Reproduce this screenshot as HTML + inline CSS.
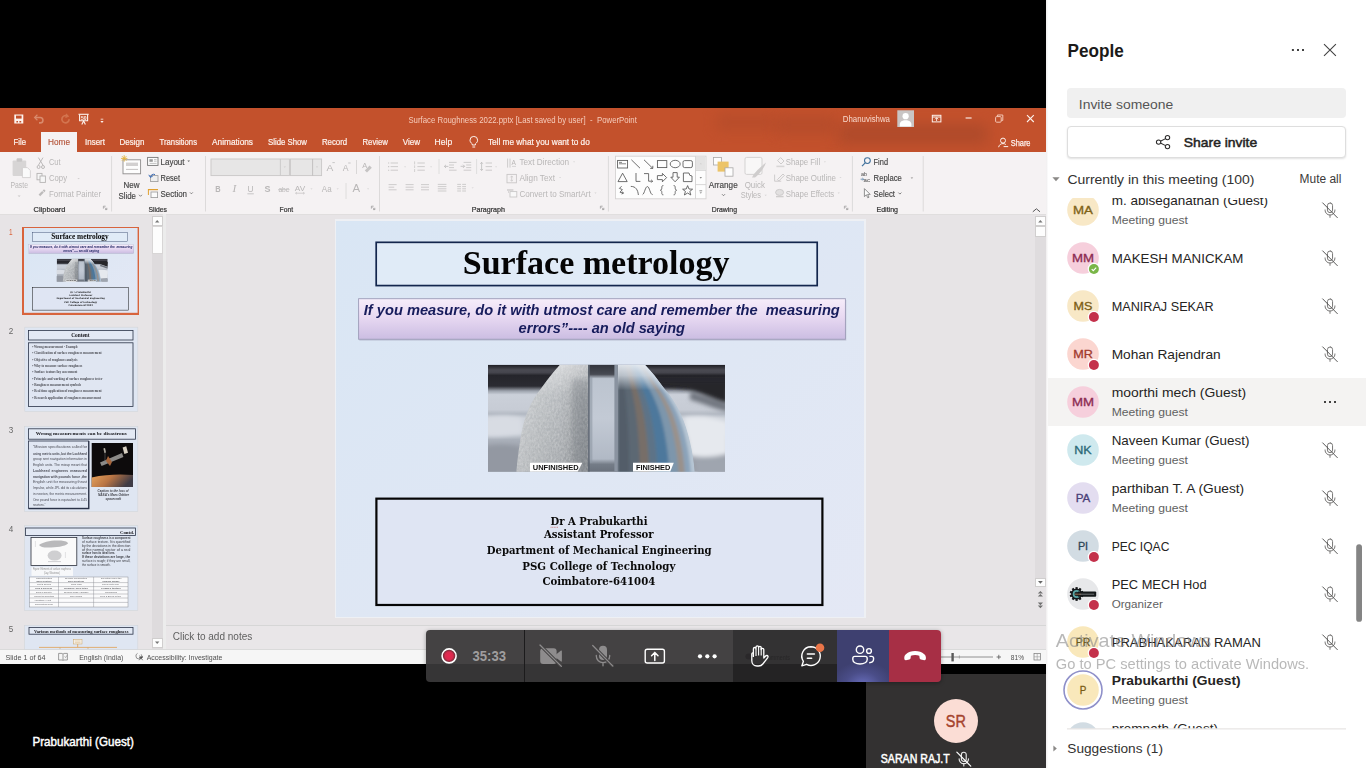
<!DOCTYPE html>
<html lang="en"><head><meta charset="utf-8"><title>Meeting - Surface metrology</title>
<style>
html,body{margin:0;padding:0}
body{width:1366px;height:768px;overflow:hidden;position:relative;background:#000;font-family:"Liberation Sans",sans-serif}
svg text{white-space:pre}
</style></head><body>
<!-- shared PowerPoint window -->
<div id="ppt" style="filter:blur(.35px)">
<div style="position:absolute;left:0px;top:108px;width:1046px;height:556px;background:#e7e4e6;"></div>
<div style="position:absolute;left:0px;top:108px;width:1046px;height:44px;background:#c3512c;"></div>
<div style="position:absolute;left:0;top:108px;width:1046px;height:44px;overflow:hidden"><div style="position:absolute;left:838px;top:16px;width:150px;height:20px;background:#a9482a;filter:blur(7px);opacity:.75"></div><div style="position:absolute;left:716px;top:6px;width:60px;height:16px;background:#b04a2a;filter:blur(7px);opacity:.6"></div><div style="position:absolute;left:776px;top:8px;width:60px;height:18px;background:#ad492a;filter:blur(7px);opacity:.6"></div></div>
<div style="position:absolute;left:0px;top:152px;width:1046px;height:61.8px;background:#f5f2f3;"></div>
<div style="position:absolute;left:41px;top:132px;width:36px;height:21px;background:#f5f2f3;"></div>
<div style="position:absolute;left:0px;top:213.6px;width:1046px;height:0.8px;background:#e0dede;"></div>
<svg width="1046" height="106" viewBox="0 108 1046 106" style="position:absolute;left:0px;top:108px;overflow:hidden;" font-family='"Liberation Sans", sans-serif'>
<path d="M14.3 114.4h9v9.2h-9z" fill="#fdf3ee"/><path d="M16 115.6h5.6v3h-5.6z" fill="#c3512c"/><path d="M16.4 121h1.6v1.6h-1.6zM19.4 121h1.8v1.6h-1.8z" fill="#c3512c"/>
<g fill="none" stroke="#d98a6c" stroke-width="1.6"><path d="M35 117.5h5.2a2.6 2.6 0 0 1 0 5.4h-1.2"/><path d="M37.4 114.8l-2.8 2.7 2.8 2.7" stroke-width="1.2"/></g>
<g fill="none" stroke="#d3744f" stroke-width="1.7"><path d="M67.5 116.2a3.6 3.6 0 1 0 1.6 3"/><path d="M66 113.8l2.2 2.4-2.8 1.2" stroke-width="1.2"/></g>
<g fill="none" stroke="#fdf3ee" stroke-width="1.1"><path d="M78.5 114.3h10.2"/><path d="M79.6 114.5v6.2h8v-6.2"/><path d="M81.8 124.4l1.8-3.4 1.8 3.4"/></g>
<text x="81.0" y="120.2" font-size="5.6" fill="#fdf3ee" textLength="5.6" lengthAdjust="spacingAndGlyphs" font-weight="700">50</text>
<path d="M100.4 121h3.2l-1.6 1.9z" fill="#fdf3ee"/><path d="M100.7 119.2h2.6" stroke="#fdf3ee" stroke-width=".8"/>
<text x="408.4" y="122.9" font-size="9.6" fill="#f6cdbd" textLength="228.5" lengthAdjust="spacingAndGlyphs">Surface Roughness 2022.pptx [Last saved by user]  -  PowerPoint</text>
<text x="842.8" y="122.3" font-size="9.2" fill="#f8d9cc" textLength="47.2" lengthAdjust="spacingAndGlyphs">Dhanuvishwa</text>
<rect x="897.3" y="110.3" width="16.7" height="16.7" fill="#c9c5c4"/><circle cx="905.6" cy="116.2" r="3.1" fill="#fff"/><path d="M899.8 126.6v-2.2c0-2.6 2.2-4.2 5.8-4.2s5.8 1.6 5.8 4.2v2.2z" fill="#fff"/>
<g fill="none" stroke="#fdf3ee" stroke-width="1"><rect x="932.3" y="115.3" width="8.6" height="6.6"/><path d="M932.3 117h8.6"/><path d="M936.6 121v-3.2m-1.6 1.5l1.6-1.6 1.6 1.6" stroke-width=".9"/></g>
<path d="M965.6 118h6" stroke="#fdf3ee" stroke-width="1.1"/>
<g fill="none" stroke="#f3c6b4" stroke-width="1"><rect x="995.6" y="116.6" width="5.6" height="5.6" rx="1"/><path d="M997.4 116.4v-1.4h5.4v5.4h-1.4"/></g>
<path d="M1027 115.2l6.8 6.8m0-6.8l-6.8 6.8" stroke="#fdf3ee" stroke-width="1.1"/>
<g fill="none" stroke="#fdf3ee" stroke-width="1"><circle cx="1003" cy="140.6" r="2.5"/><path d="M998.6 147.2c.6-2.4 2.2-3.6 4.4-3.6 1.2 0 2 .3 2.8 .9"/><path d="M1003.6 146.6h4.6"/></g>
<text x="1010.7" y="145.8" font-size="8.6" fill="#fdf3ee" textLength="19.8" lengthAdjust="spacingAndGlyphs" stroke="#fdf3ee" stroke-width="0.25">Share</text>
<text x="13.5" y="144.9" font-size="8.7" fill="#fdf3ee" textLength="12.5" lengthAdjust="spacingAndGlyphs" stroke="#fdf3ee" stroke-width="0.2">File</text>
<text x="85.0" y="144.9" font-size="8.7" fill="#fdf3ee" textLength="20.0" lengthAdjust="spacingAndGlyphs" stroke="#fdf3ee" stroke-width="0.2">Insert</text>
<text x="119.6" y="144.9" font-size="8.7" fill="#fdf3ee" textLength="24.9" lengthAdjust="spacingAndGlyphs" stroke="#fdf3ee" stroke-width="0.2">Design</text>
<text x="159.6" y="144.9" font-size="8.7" fill="#fdf3ee" textLength="37.4" lengthAdjust="spacingAndGlyphs" stroke="#fdf3ee" stroke-width="0.2">Transitions</text>
<text x="212.0" y="144.9" font-size="8.7" fill="#fdf3ee" textLength="41.0" lengthAdjust="spacingAndGlyphs" stroke="#fdf3ee" stroke-width="0.2">Animations</text>
<text x="268.0" y="144.9" font-size="8.7" fill="#fdf3ee" textLength="39.0" lengthAdjust="spacingAndGlyphs" stroke="#fdf3ee" stroke-width="0.2">Slide Show</text>
<text x="321.9" y="144.9" font-size="8.7" fill="#fdf3ee" textLength="25.3" lengthAdjust="spacingAndGlyphs" stroke="#fdf3ee" stroke-width="0.2">Record</text>
<text x="362.5" y="144.9" font-size="8.7" fill="#fdf3ee" textLength="25.5" lengthAdjust="spacingAndGlyphs" stroke="#fdf3ee" stroke-width="0.2">Review</text>
<text x="402.7" y="144.9" font-size="8.7" fill="#fdf3ee" textLength="17.3" lengthAdjust="spacingAndGlyphs" stroke="#fdf3ee" stroke-width="0.2">View</text>
<text x="434.6" y="144.9" font-size="8.7" fill="#fdf3ee" textLength="17.6" lengthAdjust="spacingAndGlyphs" stroke="#fdf3ee" stroke-width="0.2">Help</text>
<text x="487.9" y="144.9" font-size="8.7" fill="#fdf3ee" textLength="101.9" lengthAdjust="spacingAndGlyphs" stroke="#fdf3ee" stroke-width="0.2">Tell me what you want to do</text>
<text x="48.0" y="144.9" font-size="8.7" fill="#b5553a" textLength="22.0" lengthAdjust="spacingAndGlyphs" stroke="#b5553a" stroke-width="0.15">Home</text>
<g fill="none" stroke="#fdf3ee" stroke-width="1"><path d="M472.2 145v-1.2c-1.4-1-2.2-2.2-2.2-3.6a3.8 3.8 0 0 1 7.6 0c0 1.4-.8 2.6-2.2 3.6v1.2z"/><path d="M472.4 147h2.8"/></g>
<path d="M111.6 156v55.5" stroke="#dcdada" stroke-width="1"/>
<path d="M205.5 156v55.5" stroke="#dcdada" stroke-width="1"/>
<path d="M379.5 156v55.5" stroke="#dcdada" stroke-width="1"/>
<path d="M608.4 156v55.5" stroke="#dcdada" stroke-width="1"/>
<path d="M852.4 156v55.5" stroke="#dcdada" stroke-width="1"/>
<path d="M923.2 156v55.5" stroke="#dcdada" stroke-width="1"/>
<text x="33.5" y="211.8" font-size="6.9" fill="#333333" textLength="32.0" lengthAdjust="spacingAndGlyphs" stroke="#333333" stroke-width="0.2">Clipboard</text>
<text x="148.5" y="211.8" font-size="6.9" fill="#333333" textLength="18.5" lengthAdjust="spacingAndGlyphs" stroke="#333333" stroke-width="0.2">Slides</text>
<text x="279.6" y="211.8" font-size="6.9" fill="#333333" textLength="13.4" lengthAdjust="spacingAndGlyphs" stroke="#333333" stroke-width="0.2">Font</text>
<text x="471.7" y="211.8" font-size="6.9" fill="#333333" textLength="33.3" lengthAdjust="spacingAndGlyphs" stroke="#333333" stroke-width="0.2">Paragraph</text>
<text x="711.8" y="211.8" font-size="6.9" fill="#333333" textLength="25.2" lengthAdjust="spacingAndGlyphs" stroke="#333333" stroke-width="0.2">Drawing</text>
<text x="876.5" y="211.8" font-size="6.9" fill="#333333" textLength="21.5" lengthAdjust="spacingAndGlyphs" stroke="#333333" stroke-width="0.2">Editing</text>
<path d="M104.6 207.6h-2.2v2.4m1.2-1.2l2.2 2.2m0-1.8v1.8h-1.8" fill="none" stroke="#9c9a9a" stroke-width=".8" transform="translate(1 -1.4)"/>
<path d="M372.6 207.6h-2.2v2.4m1.2-1.2l2.2 2.2m0-1.8v1.8h-1.8" fill="none" stroke="#9c9a9a" stroke-width=".8" transform="translate(1 -1.4)"/>
<path d="M601.6 207.6h-2.2v2.4m1.2-1.2l2.2 2.2m0-1.8v1.8h-1.8" fill="none" stroke="#9c9a9a" stroke-width=".8" transform="translate(1 -1.4)"/>
<path d="M845.6 207.6h-2.2v2.4m1.2-1.2l2.2 2.2m0-1.8v1.8h-1.8" fill="none" stroke="#9c9a9a" stroke-width=".8" transform="translate(1 -1.4)"/>
<path d="M1032.8 211.8l3.6-3 3.6 3" fill="none" stroke="#555" stroke-width="1"/>
<g opacity=".9"><rect x="12.6" y="160.4" width="13.6" height="15.6" rx="1" fill="#d4d2d2"/><rect x="16.6" y="158.2" width="5.6" height="3.6" rx="1" fill="#c4c2c2"/><path d="M22.4 167.6h5l3 3v7h-8z" fill="#fbfbfb" stroke="#c9c7c7" stroke-width=".8"/></g>
<text x="10.5" y="187.8" font-size="8.4" fill="#b9b7b7" textLength="17.5" lengthAdjust="spacingAndGlyphs">Paste</text>
<path d="M17.6 195.4h3l-1.5 1.5z" fill="#c9c7c7"/>
<text x="49.0" y="164.6" font-size="8.4" fill="#b9b7b7" textLength="11.5" lengthAdjust="spacingAndGlyphs">Cut</text>
<text x="49.0" y="180.6" font-size="8.4" fill="#b9b7b7" textLength="18.0" lengthAdjust="spacingAndGlyphs">Copy</text>
<text x="49.0" y="196.5" font-size="8.4" fill="#b9b7b7" textLength="52.0" lengthAdjust="spacingAndGlyphs">Format Painter</text>
<path d="M77.4 178h2.4l-1.2 1.2z" fill="#d0cece"/>
<g fill="none" stroke="#b5b3b3" stroke-width=".9"><path d="M38.4 157.6l4.6 7.6m0-7.6l-4.6 7.6"/><circle cx="38.6" cy="167" r="1.5"/><circle cx="43" cy="167" r="1.5"/></g>
<g fill="#f6f6f6" stroke="#b5b3b3" stroke-width=".9"><rect x="37" y="173.4" width="5" height="6.4"/><rect x="40" y="176" width="5.4" height="6.4"/></g>
<g fill="#bdbbbb"><path d="M38.6 194.6l3.6-3.6 1.6 1.6-3.6 3.6z"/><path d="M42.6 190.4l1.4-1.2 1.6 1.6-1.2 1.4z"/></g>
<rect x="123" y="159.8" width="17.6" height="14" fill="#fdfdfd" stroke="#8f8d8d" stroke-width=".9"/><rect x="126" y="162.6" width="12" height="3.4" fill="#d2d0d0"/><path d="M126 169.4h12" stroke="#bdbbbb" stroke-width=".9"/><path d="M124.2 155.2v6.4m-3.2-3.2h6.4m-5.4-2.2l4.4 4.4m0-4.4l-4.4 4.4" stroke="#e3b23c" stroke-width=".9"/>
<text x="123.5" y="187.7" font-size="8.6" fill="#444444" textLength="16.0" lengthAdjust="spacingAndGlyphs" stroke="#444444" stroke-width="0.15">New</text>
<text x="118.5" y="198.6" font-size="8.6" fill="#444444" textLength="17.5" lengthAdjust="spacingAndGlyphs" stroke="#444444" stroke-width="0.15">Slide</text>
<path d="M139 194.8l1.5 1.5 1.5-1.5" fill="none" stroke="#666" stroke-width=".8"/>
<text x="160.5" y="164.6" font-size="8.6" fill="#444444" textLength="24.0" lengthAdjust="spacingAndGlyphs" stroke="#444444" stroke-width="0.15">Layout</text>
<text x="160.5" y="180.6" font-size="8.6" fill="#444444" textLength="19.5" lengthAdjust="spacingAndGlyphs" stroke="#444444" stroke-width="0.15">Reset</text>
<text x="160.5" y="196.5" font-size="8.6" fill="#444444" textLength="26.5" lengthAdjust="spacingAndGlyphs" stroke="#444444" stroke-width="0.15">Section</text>
<path d="M187.4 160.6h2.6l-1.3 1.3z" fill="#666"/><path d="M190 192.4l1.4 1.4 1.4-1.4" fill="none" stroke="#666" stroke-width=".8"/>
<rect x="147.6" y="157.4" width="10.4" height="8" fill="#fbfbfb" stroke="#777" stroke-width=".9"/><rect x="149.4" y="159.2" width="3.4" height="2.6" fill="#999"/><path d="M154 159.6h2.6m-2.6 1.6h2.6m-7 2.2h7" stroke="#aaa" stroke-width=".7"/>
<rect x="150.6" y="175.6" width="7.4" height="6" fill="#eee" stroke="#999" stroke-width=".8"/><path d="M150.6 177.2a3 3 0 0 1 4.4-2.6m-6.2 .2l1.6 2.6 2.4-1.4" fill="none" stroke="#3d6db5" stroke-width="1"/>
<path d="M148 189.6h10" stroke="#e0a030" stroke-width="1.2"/><rect x="151" y="192" width="6.6" height="5.6" fill="#fbfbfb" stroke="#999" stroke-width=".8"/><path d="M148.4 189v6" stroke="#e0a030" stroke-width="1"/>
<rect x="211" y="159" width="78.4" height="16.6" fill="#e7e6e6" stroke="#c9c7c7" stroke-width=".9"/><path d="M280.4 159v16.6" stroke="#c9c7c7" stroke-width=".9"/><rect x="290.4" y="159" width="31.2" height="16.6" fill="#e7e6e6" stroke="#c9c7c7" stroke-width=".9"/><path d="M312.6 159v16.6" stroke="#bdbbbb" stroke-width=".9"/><path d="M283.6 166.6h2.4l-1.2 1.2zM315.8 166.6h2.4l-1.2 1.2z" fill="#cfcdcd"/>
<text x="326.6" y="171.4" font-size="9.5" fill="#b9b7b7" textLength="6.8" lengthAdjust="spacingAndGlyphs">A</text><path d="M332.4 162.6h2.4" stroke="#bbb" stroke-width=".8"/>
<text x="342.8" y="171.4" font-size="8.4" fill="#b9b7b7" textLength="5.8" lengthAdjust="spacingAndGlyphs">A</text><path d="M348.2 163h2.4" stroke="#bbb" stroke-width=".8"/>
<path d="M356.5 160v14" stroke="#d6d4d4" stroke-width=".9"/>
<text x="362.2" y="168.4" font-size="7.6" fill="#b9b7b7" textLength="5.0" lengthAdjust="spacingAndGlyphs">A</text><path d="M364.8 170.4l4.8-4.8 2.2 2.2-4.8 4.8z" fill="#c6c4c4"/>
<text x="215.2" y="192.4" font-size="9.4" fill="#b9b7b7" textLength="5.4" lengthAdjust="spacingAndGlyphs" font-weight="700">B</text>
<text x="232.6" y="192.4" font-size="9.4" fill="#b9b7b7" textLength="3.8" lengthAdjust="spacingAndGlyphs" font-style="italic" font-family='"Liberation Serif", serif'>I</text>
<text x="247.6" y="192.0" font-size="9" fill="#b9b7b7" textLength="6.0" lengthAdjust="spacingAndGlyphs">U</text><path d="M247.4 193.8h6.4" stroke="#bbb" stroke-width=".8"/>
<text x="264.6" y="192.4" font-size="9.6" fill="#b9b7b7" textLength="6.0" lengthAdjust="spacingAndGlyphs" font-weight="700">S</text>
<text x="278.4" y="192.2" font-size="7.4" fill="#b9b7b7" textLength="10.8" lengthAdjust="spacingAndGlyphs">abc</text><path d="M278 189.6h11.6" stroke="#c2c0c0" stroke-width=".7"/>
<text x="294.8" y="190.6" font-size="8" fill="#b9b7b7" textLength="10.4" lengthAdjust="spacingAndGlyphs">AV</text><path d="M295.6 193.2h8.8m-8.8 0l1.2-1m-1.2 1l1.2 1m7.6-1l-1.2-1m1.2 1l-1.2 1" stroke="#c2c0c0" stroke-width=".7" fill="none"/>
<path d="M310.4 188.4h2.2l-1.1 1.1zM336.6 188.4h2.2l-1.1 1.1zM367 188.4h2.2l-1.1 1.1z" fill="#d0cece"/>
<text x="321.8" y="192.0" font-size="8.4" fill="#b9b7b7" textLength="9.8" lengthAdjust="spacingAndGlyphs">Aa</text>
<path d="M346 183v16" stroke="#dcdada" stroke-width=".9"/>
<text x="352.4" y="192.0" font-size="11" fill="#b9b7b7" textLength="7.6" lengthAdjust="spacingAndGlyphs">A</text>
<path d="M390.6 163.0h7.4M390.6 166.6h7.4M390.6 170.2h7.4" stroke="#c9c7c7" stroke-width="0.9" fill="none"/><path d="M388 163h1.2M388 166.6h1.2M388 170.2h1.2" stroke="#c9c7c7" stroke-width="1.1"/>
<path d="M417.4 163.0h7.4M417.4 166.6h7.4M417.4 170.2h7.4" stroke="#c9c7c7" stroke-width="0.9" fill="none"/><path d="M414.6 161.4v3M414.6 165.4v2.6M414.6 169v3" stroke="#c9c7c7" stroke-width=".8"/>
<path d="M404 166.4h2.2l-1.1 1.1zM430 166.4h2.2l-1.1 1.1zM495 166.4h2.2l-1.1 1.1zM471.6 187.4h2.2l-1.1 1.1z" fill="#d3d1d1"/>
<path d="M439 159v15M476.6 159v15" stroke="#dddbdb" stroke-width=".9"/>
<path d="M449 162.4h7.6M449 165.0h5M449 167.6h5M449 170.20000000000002h7.6" stroke="#c9c7c7" stroke-width="0.9" fill="none"/><path d="M448.4 166.4h-4m1.6-1.6l-1.6 1.6 1.6 1.6" stroke="#bdbbbb" stroke-width=".8" fill="none"/>
<path d="M463.6 162.4h7.6M466.2 165h5M466.2 167.6h5M463.6 170.2h7.6" stroke="#c9c7c7" stroke-width=".9" fill="none"/><path d="M460.6 166.3h4m-1.6-1.6l1.6 1.6-1.6 1.6" stroke="#bdbbbb" stroke-width=".8" fill="none"/>
<path d="M485.6 163.0h6.4M485.6 166.6h6.4M485.6 170.2h6.4" stroke="#c9c7c7" stroke-width="0.9" fill="none"/><path d="M481.6 162.4v8m-1.3-6.6l1.3-1.5 1.3 1.5m-2.6 5.2l1.3 1.5 1.3-1.5" stroke="#bdbbbb" stroke-width=".8" fill="none"/>
<path d="M388.6 184.6h8M388.6 187.2h5.6M388.6 189.79999999999998h8" stroke="#c9c7c7" stroke-width="0.9" fill="none"/>
<path d="M405.6 184.6h8M405.6 187.2h8M405.6 189.79999999999998h8" stroke="#c9c7c7" stroke-width="0.9" fill="none"/>
<path d="M421 184.6h8M421 187.2h8M421 189.79999999999998h8" stroke="#c9c7c7" stroke-width="0.9" fill="none"/>
<path d="M437.8 184.4h8.6M437.8 186.6h8.6M437.8 188.8h8.6M437.8 191.0h8.6" stroke="#c9c7c7" stroke-width="0.9" fill="none"/>
<path d="M457.2 184.4h3.8M457.2 186.6h3.8M457.2 188.8h3.8M457.2 191.0h3.8" stroke="#c9c7c7" stroke-width="0.9" fill="none"/><path d="M462.2 184.4h3.8M462.2 186.6h3.8M462.2 188.8h3.8M462.2 191.0h3.8" stroke="#c9c7c7" stroke-width="0.9" fill="none"/>
<path d="M507.6 158.6v9m2.4-9v9" stroke="#c9c7c7" stroke-width=".9"/><text x="511.6" y="165.0" font-size="7" fill="#b9b7b7" textLength="4.4" lengthAdjust="spacingAndGlyphs">A</text><path d="M512 166.4h4" stroke="#c9c7c7" stroke-width=".7"/>
<rect x="507" y="174.4" width="9.4" height="8.4" fill="none" stroke="#c9c7c7" stroke-width=".9"/><path d="M511.7 176v5.2m-1.4-3.8l1.4-1.4 1.4 1.4m-2.8 2.4l1.4 1.4 1.4-1.4" stroke="#c9c7c7" stroke-width=".8" fill="none"/>
<rect x="510" y="191.6" width="6.8" height="5.4" fill="#f8f8f8" stroke="#c9c7c7" stroke-width=".9"/><path d="M507 190h6.4M508 192h1" stroke="#bdbbbb" stroke-width="1"/>
<text x="519.4" y="165.0" font-size="8.6" fill="#b9b7b7" textLength="49.8" lengthAdjust="spacingAndGlyphs">Text Direction</text>
<text x="519.4" y="180.7" font-size="8.6" fill="#b9b7b7" textLength="35.6" lengthAdjust="spacingAndGlyphs">Align Text</text>
<text x="519.4" y="196.6" font-size="8.6" fill="#b9b7b7" textLength="71.4" lengthAdjust="spacingAndGlyphs">Convert to SmartArt</text>
<path d="M573 161.4h2.2l-1.1 1.1zM559 177h2.2l-1.1 1.1zM594.4 192.6h2.2l-1.1 1.1z" fill="#d3d1d1"/>
<rect x="615.5" y="156.2" width="90.5" height="42.6" fill="#fdfdfd" stroke="#d4d2d2" stroke-width=".9"/><path d="M695.5 156.2v42.6M695.5 170.4h10.5M695.5 184.6h10.5" stroke="#d4d2d2" stroke-width=".9"/><rect x="696" y="156.7" width="9.6" height="13.2" fill="#e4e3e3"/><path d="M699.6 177.2h2.4l-1.2 1.2zM699.6 192.4h2.4l-1.2 1.2z" fill="#666"/><path d="M699.4 190.8h2.8" stroke="#666" stroke-width=".7"/><path d="M699.6 164.2h2.4l-1.2-1.2z" fill="#cfcdcd"/>
<g fill="none" stroke="#555555" stroke-width=".85"><rect x="617.6" y="160.4" width="10" height="7.6"/><path d="M619 162.4h3m-3 1.4h7" stroke-width=".7"/><path d="M631.4 159.8l8.6 8.4"/><path d="M644 159.8l8.8 8.6m0-2.6v2.6h-2.6"/><rect x="657.4" y="160.6" width="9.4" height="7"/><ellipse cx="675.2" cy="164" rx="5" ry="3.7"/><rect x="683" y="160.6" width="9.4" height="7" rx="1.6"/><path d="M622.6 173.2l4.6 8.4h-9.2z"/><path d="M636 173v8.4h4.4"/><path d="M644 173.6h4.6v7.6h4m-1.4-1.4l1.4 1.4-1.4 1.4"/><path d="M657.4 175.6h5v-2.2l4.2 4.2-4.2 4.2v-2.2h-5z"/><path d="M673 172.6h4.2v4.6h2.2l-4.3 4.6-4.3-4.6h2.2z"/><path d="M683.4 173h5.6a3 3 0 0 0 3 3v5.6h-8.6z"/><path d="M621.6 186.2l-2.2 2.2 3 1.2-2.4 2.6 3.4 1m-1-1.6l1 1.6-1.8 .8"/><path d="M630.8 186.4c5 0 7 3.4 7.6 8.6"/><path d="M642.6 194.6c2-1 2.6-8 4.8-8s2.6 8 5.2 8"/><path d="M663.4 185.6c-1.6 0-1.6 .6-1.6 2.2s-.4 2.2-1.4 2.4c1 .2 1.4 .8 1.4 2.4s0 2.2 1.6 2.2"/><path d="M673.6 185.6c1.6 0 1.6 .6 1.6 2.2s.4 2.2 1.4 2.4c-1 .2-1.4 .8-1.4 2.4s0 2.2-1.6 2.2"/><path d="M687.6 185.6l1.4 3.4 3.6 .2-2.8 2.2 1 3.6-3.2-2-3.2 2 1-3.6-2.8-2.2 3.6-.2z"/></g>
<rect x="713.4" y="157.4" width="8" height="7.6" fill="#fdfdfd" stroke="#a9a7a7" stroke-width=".8"/><rect x="717.6" y="161.6" width="11" height="10" fill="#ecc468"/><rect x="725" y="167.8" width="8" height="8.4" fill="#fdfdfd" stroke="#a9a7a7" stroke-width=".8"/>
<text x="708.7" y="188.2" font-size="8.8" fill="#444444" textLength="29.0" lengthAdjust="spacingAndGlyphs" stroke="#444444" stroke-width="0.15">Arrange</text>
<path d="M722 194.2l1.5 1.5 1.5-1.5" fill="none" stroke="#666" stroke-width=".8"/>
<rect x="745" y="157.4" width="17" height="17" rx="1.6" fill="#f8f7f7" stroke="#d0cece" stroke-width=".9"/><path d="M752 177.4c2-5 8-10 14-15-2 6-7 12-11 15z" fill="#cfcdcd"/>
<text x="744.7" y="188.2" font-size="8.6" fill="#b9b7b7" textLength="20.3" lengthAdjust="spacingAndGlyphs">Quick</text>
<text x="740.7" y="198.3" font-size="8.6" fill="#b9b7b7" textLength="20.3" lengthAdjust="spacingAndGlyphs">Styles</text>
<path d="M764.6 194.8h2.2l-1.1 1.1z" fill="#d3d1d1"/>
<path d="M777.6 160.6l3-3 3.4 3.4-3 3z" fill="none" stroke="#c9c7c7" stroke-width=".9"/><path d="M776.4 166.4h8" stroke="#d8d6d6" stroke-width="1.6"/>
<path d="M774.6 174.6v6.6h6.6M777.4 179.6l5.6-5.6 1.4 1.4-5.6 5.6z" fill="none" stroke="#c9c7c7" stroke-width=".9"/>
<ellipse cx="779.6" cy="192.4" rx="4" ry="3" fill="#e2e0e0" stroke="#c9c7c7" stroke-width=".9"/><path d="M776 196.6h7.6" stroke="#cfcdcd" stroke-width="1.4"/>
<text x="785.7" y="165.0" font-size="8.6" fill="#b9b7b7" textLength="34.6" lengthAdjust="spacingAndGlyphs">Shape Fill</text>
<text x="785.7" y="180.7" font-size="8.6" fill="#b9b7b7" textLength="50.3" lengthAdjust="spacingAndGlyphs">Shape Outline</text>
<text x="785.7" y="196.6" font-size="8.6" fill="#b9b7b7" textLength="48.6" lengthAdjust="spacingAndGlyphs">Shape Effects</text>
<path d="M823.8 161.4h2.2l-1.1 1.1zM839.4 177h2.2l-1.1 1.1zM837.6 192.6h2.2l-1.1 1.1z" fill="#d3d1d1"/>
<circle cx="867.4" cy="160.6" r="2.9" fill="none" stroke="#41719c" stroke-width="1.1"/><path d="M865.2 162.8l-3.2 3.4" stroke="#41719c" stroke-width="1.2"/>
<text x="873.6" y="164.8" font-size="8.6" fill="#444444" textLength="14.4" lengthAdjust="spacingAndGlyphs" stroke="#444444" stroke-width="0.15">Find</text>
<text x="861.0" y="176.4" font-size="5.4" fill="#444444" textLength="6.0" lengthAdjust="spacingAndGlyphs">ab</text><text x="863.6" y="182.2" font-size="5.4" fill="#444444" textLength="6.4" lengthAdjust="spacingAndGlyphs">ac</text><path d="M860.6 179.2h3m-1.2-1.2l1.2 1.2-1.2 1.2" stroke="#41719c" stroke-width=".7" fill="none"/>
<text x="873.6" y="181.0" font-size="8.6" fill="#444444" textLength="28.2" lengthAdjust="spacingAndGlyphs" stroke="#444444" stroke-width="0.15">Replace</text>
<path d="M910.6 177.4h2.6l-1.3 1.3z" fill="#8a8888"/>
<path d="M864.4 188.6v8l2-1.8 1.4 3 1.2-.6-1.4-2.8h2.6z" fill="#fbfbfb" stroke="#777" stroke-width=".8"/>
<text x="873.6" y="196.7" font-size="8.6" fill="#444444" textLength="21.4" lengthAdjust="spacingAndGlyphs" stroke="#444444" stroke-width="0.15">Select</text>
<path d="M898.4 192.6l1.5 1.5 1.5-1.5" fill="none" stroke="#666" stroke-width=".8"/>
</svg>
<div style="position:absolute;left:152px;top:215.8px;width:10.6px;height:433.2px;background:#dedbdd;"></div>
<div style="position:absolute;left:163px;top:214px;width:2.5px;height:435px;background:#ececec;"></div>
<div style="position:absolute;left:152px;top:215.8px;width:10.6px;height:10.4px;background:#fdfdfd;box-sizing:border-box;border:1px solid #d0cece"></div>
<div style="position:absolute;left:152px;top:226.2px;width:10.6px;height:28.2px;background:#fdfdfd;box-sizing:border-box;border:1px solid #d8d6d6"></div>
<div style="position:absolute;left:152px;top:637.5px;width:10.6px;height:10.5px;background:#fdfdfd;box-sizing:border-box;border:1px solid #d0cece"></div>
<div style="position:absolute;left:334.5px;top:219px;width:531px;height:399px;background:#eef1f5;opacity:.9"></div>
<svg width="528" height="396.5" viewBox="336 220.5 528 396" preserveAspectRatio="none" style="position:absolute;left:336px;top:220.5px;" font-family='"Liberation Sans", sans-serif'>
<defs><linearGradient id="sbm" x1="0" y1="0" x2="1" y2="1"><stop offset="0" stop-color="#d9e6f4"/><stop offset=".55" stop-color="#dfe7f4"/><stop offset="1" stop-color="#e4e8f5"/></linearGradient>
<linearGradient id="qbm" x1="0" y1="0" x2="0" y2="1"><stop offset="0" stop-color="#f6edfa"/><stop offset=".45" stop-color="#e8d9f2"/><stop offset="1" stop-color="#cbbde2"/></linearGradient></defs>
<rect x="336" y="220.5" width="528" height="396" fill="url(#sbm)"/>
<rect x="376.2" y="241.8" width="441" height="43.2" fill="#e0ebf7" stroke="#13264d" stroke-width="1.7"/>
<text x="462.8" y="273.5" font-size="34" fill="#050505" textLength="266.7" lengthAdjust="spacingAndGlyphs" font-weight="700" font-family='"Liberation Serif", serif'>Surface metrology</text>
<rect x="359.3" y="299.4" width="487" height="40.6" fill="#8f8fa8" opacity=".35"/>
<rect x="358.6" y="298.1" width="486.8" height="40.5" fill="url(#qbm)" stroke="#9d9cb8" stroke-width=".9"/>
<text x="363.8" y="314.8" font-size="14.6" fill="#171c5c" textLength="476.0" lengthAdjust="spacingAndGlyphs" font-weight="700" font-style="italic" xml:space="preserve">If you measure, do it with utmost care and remember the  measuring</text>
<text x="518.6" y="332.7" font-size="14.6" fill="#171c5c" textLength="166.4" lengthAdjust="spacingAndGlyphs" font-weight="700" font-style="italic">errors”---- an old saying</text>
<defs>
<linearGradient id="bgm" x1="0" y1="0" x2="0" y2="1"><stop offset="0" stop-color="#1c1c21"/><stop offset=".05" stop-color="#4a4a52"/><stop offset=".075" stop-color="#45454d"/><stop offset=".1" stop-color="#25252b"/><stop offset=".2" stop-color="#2b2b32"/><stop offset=".245" stop-color="#9da3ad"/><stop offset=".28" stop-color="#cbd0d9"/><stop offset=".42" stop-color="#c7ccd5"/><stop offset=".46" stop-color="#b2b8c2"/><stop offset=".5" stop-color="#cdd2da"/><stop offset=".64" stop-color="#cfd4dc"/><stop offset=".7" stop-color="#aab0ba"/><stop offset=".8" stop-color="#9ca1ab"/><stop offset="1" stop-color="#9a9ea8"/></linearGradient>
<linearGradient id="dlm" x1="0" y1="0" x2="1" y2="0"><stop offset="0" stop-color="#c6c9cc"/><stop offset=".3" stop-color="#b9bdc0"/><stop offset=".6" stop-color="#aeb2b6"/><stop offset=".78" stop-color="#9fa3a7"/><stop offset=".9" stop-color="#92969b"/><stop offset="1" stop-color="#888d92"/></linearGradient>
<linearGradient id="mdm" x1="0" y1="0" x2="0" y2="1"><stop offset="0" stop-color="#33353c"/><stop offset=".09" stop-color="#474a52"/><stop offset=".13" stop-color="#bcc4cf"/><stop offset=".5" stop-color="#c3cad5"/><stop offset=".88" stop-color="#b1b9c5"/><stop offset=".93" stop-color="#747c87"/><stop offset="1" stop-color="#6a717c"/></linearGradient>
<linearGradient id="shm" x1="0" y1="0" x2="0" y2="1"><stop offset="0" stop-color="#fff" stop-opacity=".5"/><stop offset=".3" stop-color="#fff" stop-opacity=".08"/><stop offset="1" stop-color="#000" stop-opacity=".06"/></linearGradient>
<linearGradient id="hrm" x1="0" y1="0" x2="0" y2="1"><stop offset="0" stop-color="#eef2f7" stop-opacity=".9"/><stop offset=".1" stop-color="#e4eaf1" stop-opacity=".7"/><stop offset=".24" stop-color="#dfe6ee" stop-opacity="0"/></linearGradient>
<clipPath id="cpm"><rect x="488" y="364.9" width="237" height="107"/></clipPath>
<clipPath id="crm"><path d="M617.6 364.9V472H694.7C693.8 461 692.4 452 690 442C687.6 432 685 423.5 680.7 414C676.4 404.5 671 396.5 663.9 388C658.5 380.5 652.5 372.5 645 364.9Z"/></clipPath>
<clipPath id="clm"><path d="M588 364.9V472H516.4C517.5 460 518.5 451 520 442C521.8 431 523.5 423 526.7 414C530 404.5 535 396.5 541.6 388C547 380 553 372.5 560 364.9Z"/></clipPath>
<filter id="blm" x="-10%" y="-10%" width="120%" height="120%"><feGaussianBlur stdDeviation="1.8 .6"/></filter>
<filter id="b2m" x="-10%" y="-10%" width="120%" height="120%"><feGaussianBlur stdDeviation="2"/></filter>
<filter id="nzm" x="0" y="0" width="100%" height="100%"><feTurbulence type="fractalNoise" baseFrequency=".55 .35" numOctaves="2" seed="4"/><feColorMatrix type="matrix" values="0 0 0 0 1  0 0 0 0 1  0 0 0 0 1  .9 .9 0 0 -.62"/></filter>
</defs>
<g transform="translate(0 -.9)"><g clip-path="url(#cpm)">
<rect x="488" y="364.9" width="237" height="107" fill="url(#bgm)"/>
<g filter="url(#b2m)">
<path d="M648 380h80v24c-14-4-26-10-38-14-14-3-28-2.600000000000001-42-2.600000000000001z" fill="#26262c"/>
<path d="M690 392c14 4 24 9 38 13v7c-14-3-26-9-38-12z" fill="#70757e"/>
<path d="M684 418c14-3 28-1 44 4v32c-12 3-26 4-38 2z" fill="#e6e9ee"/>
<path d="M696 459c10-3 22-2 32 0v16h-32z" fill="#9fa5af"/>
<path d="M484 418c18-3 30-2 38 1v14c-12 3-26 4-38 3z" fill="#d8dce3"/>
<path d="M484 447c12-3 26-2 36 0v28h-36z" fill="#9398a2"/>
</g>
<path d="M588 364.9V472H516.4C517.5 460 518.5 451 520 442C521.8 431 523.5 423 526.7 414C530 404.5 535 396.5 541.6 388C547 380 553 372.5 560 364.9Z" fill="url(#dlm)"/>
<path d="M588 364.9V472H516.4C517.5 460 518.5 451 520 442C521.8 431 523.5 423 526.7 414C530 404.5 535 396.5 541.6 388C547 380 553 372.5 560 364.9Z" fill="url(#shm)"/>
<g clip-path="url(#clm)"><rect x="510" y="364.9" width="80" height="107" filter="url(#nzm)" opacity=".38"/><rect x="572" y="380" width="16" height="92" fill="#7d8288" opacity=".35" filter="url(#b2m)"/></g>
<rect x="588" y="364.9" width="29.8" height="107" fill="url(#mdm)"/>
<rect x="588" y="364.9" width="1.8" height="107" fill="#5f6772" opacity=".9"/>
<rect x="590" y="377" width="2.4" height="86" fill="#8e97a3" opacity=".6"/>
<rect x="614.4" y="364.9" width="3.4" height="107" fill="#8a93a0"/>
<g clip-path="url(#crm)"><path d="M617.6 364.9V472H694.7C693.8 461 692.4 452 690 442C687.6 432 685 423.5 680.7 414C676.4 404.5 671 396.5 663.9 388C658.5 380.5 652.5 372.5 645 364.9Z" fill="#b7c6d4"/><g filter="url(#blm)"><path d="M617.6 364.9V472H694.7C693.8 461 692.4 452 690 442C687.6 432 685 423.5 680.7 414C676.4 404.5 671 396.5 663.9 388C658.5 380.5 652.5 372.5 645 364.9Z" fill="#b7c6d4" transform="translate(0.00 0) scale(1.0 1)"/><path d="M617.6 364.9V472H694.7C693.8 461 692.4 452 690 442C687.6 432 685 423.5 680.7 414C676.4 404.5 671 396.5 663.9 388C658.5 380.5 652.5 372.5 645 364.9Z" fill="#8ba3b9" transform="translate(30.88 0) scale(0.95 1)"/><path d="M617.6 364.9V472H694.7C693.8 461 692.4 452 690 442C687.6 432 685 423.5 680.7 414C676.4 404.5 671 396.5 663.9 388C658.5 380.5 652.5 372.5 645 364.9Z" fill="#9a918b" transform="translate(80.29 0) scale(0.87 1)"/><path d="M617.6 364.9V472H694.7C693.8 461 692.4 452 690 442C687.6 432 685 423.5 680.7 414C676.4 404.5 671 396.5 663.9 388C658.5 380.5 652.5 372.5 645 364.9Z" fill="#7d96ac" transform="translate(129.70 0) scale(0.79 1)"/><path d="M617.6 364.9V472H694.7C693.8 461 692.4 452 690 442C687.6 432 685 423.5 680.7 414C676.4 404.5 671 396.5 663.9 388C658.5 380.5 652.5 372.5 645 364.9Z" fill="#4d789c" transform="translate(203.81 0) scale(0.67 1)"/><path d="M617.6 364.9V472H694.7C693.8 461 692.4 452 690 442C687.6 432 685 423.5 680.7 414C676.4 404.5 671 396.5 663.9 388C658.5 380.5 652.5 372.5 645 364.9Z" fill="#5d7387" transform="translate(296.45 0) scale(0.52 1)"/><path d="M617.6 364.9V472H694.7C693.8 461 692.4 452 690 442C687.6 432 685 423.5 680.7 414C676.4 404.5 671 396.5 663.9 388C658.5 380.5 652.5 372.5 645 364.9Z" fill="#776e68" transform="translate(364.38 0) scale(0.41 1)"/><path d="M617.6 364.9V472H694.7C693.8 461 692.4 452 690 442C687.6 432 685 423.5 680.7 414C676.4 404.5 671 396.5 663.9 388C658.5 380.5 652.5 372.5 645 364.9Z" fill="#5c6773" transform="translate(438.50 0) scale(0.29 1)"/><path d="M617.6 364.9V472H694.7C693.8 461 692.4 452 690 442C687.6 432 685 423.5 680.7 414C676.4 404.5 671 396.5 663.9 388C658.5 380.5 652.5 372.5 645 364.9Z" fill="#525d69" transform="translate(524.96 0) scale(0.15 1)"/></g><path d="M617.6 364.9V472H694.7C693.8 461 692.4 452 690 442C687.6 432 685 423.5 680.7 414C676.4 404.5 671 396.5 663.9 388C658.5 380.5 652.5 372.5 645 364.9Z" fill="url(#hrm)"/></g>
<path d="M530 462.9h52.3l-4.6 9h-47.7z" fill="#fff"/>
<path d="M633 462.9h40.8l-3.6 9h-37.2z" fill="#fff"/>
<text x="532.8" y="470.0" font-size="6.3" fill="#111" textLength="45.8" lengthAdjust="spacingAndGlyphs" font-weight="700">UNFINISHED</text>
<text x="635.9" y="470.0" font-size="6.3" fill="#111" textLength="34.5" lengthAdjust="spacingAndGlyphs" font-weight="700">FINISHED</text>
</g></g>
<rect x="376.4" y="497.8" width="446" height="106.2" fill="#dfe5f3" stroke="#050505" stroke-width="2.2"/>
<text x="550.6" y="524.1" font-size="10.3" fill="#0a0a0a" textLength="96.9" lengthAdjust="spacingAndGlyphs" font-weight="700" font-family='"DejaVu Serif", "Liberation Serif", serif'>Dr A Prabukarthi</text>
<path d="M550.6 526.4h8" stroke="#c0504d" stroke-width=".6" stroke-dasharray="1 .6"/>
<text x="544.0" y="537.1" font-size="10.3" fill="#0a0a0a" textLength="109.7" lengthAdjust="spacingAndGlyphs" font-weight="700" font-family='"DejaVu Serif", "Liberation Serif", serif'>Assistant Professor</text>
<text x="486.7" y="552.8" font-size="10.3" fill="#0a0a0a" textLength="225.0" lengthAdjust="spacingAndGlyphs" font-weight="700" font-family='"DejaVu Serif", "Liberation Serif", serif'>Department of Mechanical Engineering</text>
<text x="522.3" y="568.8" font-size="10.3" fill="#0a0a0a" textLength="153.1" lengthAdjust="spacingAndGlyphs" font-weight="700" font-family='"DejaVu Serif", "Liberation Serif", serif'>PSG College of Technology</text>
<text x="542.4" y="584.5" font-size="10.3" fill="#0a0a0a" textLength="112.9" lengthAdjust="spacingAndGlyphs" font-weight="700" font-family='"DejaVu Serif", "Liberation Serif", serif'>Coimbatore-641004</text>
</svg>
<div style="position:absolute;left:1034.5px;top:215.8px;width:11.5px;height:362px;background:#dfdcde;"></div>
<div style="position:absolute;left:1035px;top:577.8px;width:10.5px;height:9.6px;background:#fdfdfd;box-sizing:border-box;border:1px solid #d0cece"></div>
<div style="position:absolute;left:1035px;top:215.8px;width:10.5px;height:10.4px;background:#fdfdfd;box-sizing:border-box;border:1px solid #d0cece"></div>
<div style="position:absolute;left:1035px;top:226.2px;width:10.5px;height:10.8px;background:#fdfdfd;box-sizing:border-box;border:1px solid #d0cece"></div>
<div style="position:absolute;left:165.5px;top:624.5px;width:880.5px;height:1px;background:#d6d6d6;"></div>
<div style="position:absolute;left:165.5px;top:625.5px;width:880.5px;height:23.5px;background:#e9e6e8;"></div>
<div style="position:absolute;left:0px;top:649px;width:1046px;height:15px;background:#f6f6f6;"></div>
<div style="position:absolute;left:0px;top:649px;width:1046px;height:0.8px;background:#dadada;"></div>
<div style="position:absolute;left:22.2px;top:226.5px;width:117.2px;height:88.4px;background:#d8643d;"></div>
<svg width="113.6" height="84.8" viewBox="336 220.5 528 396" preserveAspectRatio="none" style="position:absolute;left:24px;top:228.3px;" font-family='"Liberation Sans", sans-serif'>
<defs><linearGradient id="sbt" x1="0" y1="0" x2="1" y2="1"><stop offset="0" stop-color="#d9e6f4"/><stop offset=".55" stop-color="#dfe7f4"/><stop offset="1" stop-color="#e4e8f5"/></linearGradient>
<linearGradient id="qbt" x1="0" y1="0" x2="0" y2="1"><stop offset="0" stop-color="#f6edfa"/><stop offset=".45" stop-color="#e8d9f2"/><stop offset="1" stop-color="#cbbde2"/></linearGradient></defs>
<rect x="336" y="220.5" width="528" height="396" fill="url(#sbt)"/>
<rect x="376.2" y="241.8" width="441" height="43.2" fill="#e0ebf7" stroke="#13264d" stroke-width="1.7"/>
<text x="462.8" y="273.5" font-size="34" fill="#050505" textLength="266.7" lengthAdjust="spacingAndGlyphs" font-weight="700" font-family='"Liberation Serif", serif'>Surface metrology</text>
<rect x="359.3" y="299.4" width="487" height="40.6" fill="#8f8fa8" opacity=".35"/>
<rect x="358.6" y="298.1" width="486.8" height="40.5" fill="url(#qbt)" stroke="#9d9cb8" stroke-width=".9"/>
<text x="363.8" y="314.8" font-size="14.6" fill="#171c5c" textLength="476.0" lengthAdjust="spacingAndGlyphs" font-weight="700" font-style="italic" xml:space="preserve">If you measure, do it with utmost care and remember the  measuring</text>
<text x="518.6" y="332.7" font-size="14.6" fill="#171c5c" textLength="166.4" lengthAdjust="spacingAndGlyphs" font-weight="700" font-style="italic">errors”---- an old saying</text>
<defs>
<linearGradient id="bgt" x1="0" y1="0" x2="0" y2="1"><stop offset="0" stop-color="#1c1c21"/><stop offset=".05" stop-color="#4a4a52"/><stop offset=".075" stop-color="#45454d"/><stop offset=".1" stop-color="#25252b"/><stop offset=".2" stop-color="#2b2b32"/><stop offset=".245" stop-color="#9da3ad"/><stop offset=".28" stop-color="#cbd0d9"/><stop offset=".42" stop-color="#c7ccd5"/><stop offset=".46" stop-color="#b2b8c2"/><stop offset=".5" stop-color="#cdd2da"/><stop offset=".64" stop-color="#cfd4dc"/><stop offset=".7" stop-color="#aab0ba"/><stop offset=".8" stop-color="#9ca1ab"/><stop offset="1" stop-color="#9a9ea8"/></linearGradient>
<linearGradient id="dlt" x1="0" y1="0" x2="1" y2="0"><stop offset="0" stop-color="#c6c9cc"/><stop offset=".3" stop-color="#b9bdc0"/><stop offset=".6" stop-color="#aeb2b6"/><stop offset=".78" stop-color="#9fa3a7"/><stop offset=".9" stop-color="#92969b"/><stop offset="1" stop-color="#888d92"/></linearGradient>
<linearGradient id="mdt" x1="0" y1="0" x2="0" y2="1"><stop offset="0" stop-color="#33353c"/><stop offset=".09" stop-color="#474a52"/><stop offset=".13" stop-color="#bcc4cf"/><stop offset=".5" stop-color="#c3cad5"/><stop offset=".88" stop-color="#b1b9c5"/><stop offset=".93" stop-color="#747c87"/><stop offset="1" stop-color="#6a717c"/></linearGradient>
<linearGradient id="sht" x1="0" y1="0" x2="0" y2="1"><stop offset="0" stop-color="#fff" stop-opacity=".5"/><stop offset=".3" stop-color="#fff" stop-opacity=".08"/><stop offset="1" stop-color="#000" stop-opacity=".06"/></linearGradient>
<linearGradient id="hrt" x1="0" y1="0" x2="0" y2="1"><stop offset="0" stop-color="#eef2f7" stop-opacity=".9"/><stop offset=".1" stop-color="#e4eaf1" stop-opacity=".7"/><stop offset=".24" stop-color="#dfe6ee" stop-opacity="0"/></linearGradient>
<clipPath id="cpt"><rect x="488" y="364.9" width="237" height="107"/></clipPath>
<clipPath id="crt"><path d="M617.6 364.9V472H694.7C693.8 461 692.4 452 690 442C687.6 432 685 423.5 680.7 414C676.4 404.5 671 396.5 663.9 388C658.5 380.5 652.5 372.5 645 364.9Z"/></clipPath>
<clipPath id="clt"><path d="M588 364.9V472H516.4C517.5 460 518.5 451 520 442C521.8 431 523.5 423 526.7 414C530 404.5 535 396.5 541.6 388C547 380 553 372.5 560 364.9Z"/></clipPath>
<filter id="blt" x="-10%" y="-10%" width="120%" height="120%"><feGaussianBlur stdDeviation="1.8 .6"/></filter>
<filter id="b2t" x="-10%" y="-10%" width="120%" height="120%"><feGaussianBlur stdDeviation="2"/></filter>
<filter id="nzt" x="0" y="0" width="100%" height="100%"><feTurbulence type="fractalNoise" baseFrequency=".55 .35" numOctaves="2" seed="4"/><feColorMatrix type="matrix" values="0 0 0 0 1  0 0 0 0 1  0 0 0 0 1  .9 .9 0 0 -.62"/></filter>
</defs>
<g transform="translate(0 -.9)"><g clip-path="url(#cpt)">
<rect x="488" y="364.9" width="237" height="107" fill="url(#bgt)"/>
<g filter="url(#b2t)">
<path d="M648 380h80v24c-14-4-26-10-38-14-14-3-28-2.600000000000001-42-2.600000000000001z" fill="#26262c"/>
<path d="M690 392c14 4 24 9 38 13v7c-14-3-26-9-38-12z" fill="#70757e"/>
<path d="M684 418c14-3 28-1 44 4v32c-12 3-26 4-38 2z" fill="#e6e9ee"/>
<path d="M696 459c10-3 22-2 32 0v16h-32z" fill="#9fa5af"/>
<path d="M484 418c18-3 30-2 38 1v14c-12 3-26 4-38 3z" fill="#d8dce3"/>
<path d="M484 447c12-3 26-2 36 0v28h-36z" fill="#9398a2"/>
</g>
<path d="M588 364.9V472H516.4C517.5 460 518.5 451 520 442C521.8 431 523.5 423 526.7 414C530 404.5 535 396.5 541.6 388C547 380 553 372.5 560 364.9Z" fill="url(#dlt)"/>
<path d="M588 364.9V472H516.4C517.5 460 518.5 451 520 442C521.8 431 523.5 423 526.7 414C530 404.5 535 396.5 541.6 388C547 380 553 372.5 560 364.9Z" fill="url(#sht)"/>
<g clip-path="url(#clt)"><rect x="510" y="364.9" width="80" height="107" filter="url(#nzt)" opacity=".38"/><rect x="572" y="380" width="16" height="92" fill="#7d8288" opacity=".35" filter="url(#b2t)"/></g>
<rect x="588" y="364.9" width="29.8" height="107" fill="url(#mdt)"/>
<rect x="588" y="364.9" width="1.8" height="107" fill="#5f6772" opacity=".9"/>
<rect x="590" y="377" width="2.4" height="86" fill="#8e97a3" opacity=".6"/>
<rect x="614.4" y="364.9" width="3.4" height="107" fill="#8a93a0"/>
<g clip-path="url(#crt)"><path d="M617.6 364.9V472H694.7C693.8 461 692.4 452 690 442C687.6 432 685 423.5 680.7 414C676.4 404.5 671 396.5 663.9 388C658.5 380.5 652.5 372.5 645 364.9Z" fill="#b7c6d4"/><g filter="url(#blt)"><path d="M617.6 364.9V472H694.7C693.8 461 692.4 452 690 442C687.6 432 685 423.5 680.7 414C676.4 404.5 671 396.5 663.9 388C658.5 380.5 652.5 372.5 645 364.9Z" fill="#b7c6d4" transform="translate(0.00 0) scale(1.0 1)"/><path d="M617.6 364.9V472H694.7C693.8 461 692.4 452 690 442C687.6 432 685 423.5 680.7 414C676.4 404.5 671 396.5 663.9 388C658.5 380.5 652.5 372.5 645 364.9Z" fill="#8ba3b9" transform="translate(30.88 0) scale(0.95 1)"/><path d="M617.6 364.9V472H694.7C693.8 461 692.4 452 690 442C687.6 432 685 423.5 680.7 414C676.4 404.5 671 396.5 663.9 388C658.5 380.5 652.5 372.5 645 364.9Z" fill="#9a918b" transform="translate(80.29 0) scale(0.87 1)"/><path d="M617.6 364.9V472H694.7C693.8 461 692.4 452 690 442C687.6 432 685 423.5 680.7 414C676.4 404.5 671 396.5 663.9 388C658.5 380.5 652.5 372.5 645 364.9Z" fill="#7d96ac" transform="translate(129.70 0) scale(0.79 1)"/><path d="M617.6 364.9V472H694.7C693.8 461 692.4 452 690 442C687.6 432 685 423.5 680.7 414C676.4 404.5 671 396.5 663.9 388C658.5 380.5 652.5 372.5 645 364.9Z" fill="#4d789c" transform="translate(203.81 0) scale(0.67 1)"/><path d="M617.6 364.9V472H694.7C693.8 461 692.4 452 690 442C687.6 432 685 423.5 680.7 414C676.4 404.5 671 396.5 663.9 388C658.5 380.5 652.5 372.5 645 364.9Z" fill="#5d7387" transform="translate(296.45 0) scale(0.52 1)"/><path d="M617.6 364.9V472H694.7C693.8 461 692.4 452 690 442C687.6 432 685 423.5 680.7 414C676.4 404.5 671 396.5 663.9 388C658.5 380.5 652.5 372.5 645 364.9Z" fill="#776e68" transform="translate(364.38 0) scale(0.41 1)"/><path d="M617.6 364.9V472H694.7C693.8 461 692.4 452 690 442C687.6 432 685 423.5 680.7 414C676.4 404.5 671 396.5 663.9 388C658.5 380.5 652.5 372.5 645 364.9Z" fill="#5c6773" transform="translate(438.50 0) scale(0.29 1)"/><path d="M617.6 364.9V472H694.7C693.8 461 692.4 452 690 442C687.6 432 685 423.5 680.7 414C676.4 404.5 671 396.5 663.9 388C658.5 380.5 652.5 372.5 645 364.9Z" fill="#525d69" transform="translate(524.96 0) scale(0.15 1)"/></g><path d="M617.6 364.9V472H694.7C693.8 461 692.4 452 690 442C687.6 432 685 423.5 680.7 414C676.4 404.5 671 396.5 663.9 388C658.5 380.5 652.5 372.5 645 364.9Z" fill="url(#hrt)"/></g>
<path d="M530 462.9h52.3l-4.6 9h-47.7z" fill="#fff"/>
<path d="M633 462.9h40.8l-3.6 9h-37.2z" fill="#fff"/>
<text x="532.8" y="470.0" font-size="6.3" fill="#111" textLength="45.8" lengthAdjust="spacingAndGlyphs" font-weight="700">UNFINISHED</text>
<text x="635.9" y="470.0" font-size="6.3" fill="#111" textLength="34.5" lengthAdjust="spacingAndGlyphs" font-weight="700">FINISHED</text>
</g></g>
<rect x="376.4" y="497.8" width="446" height="106.2" fill="#dfe5f3" stroke="#050505" stroke-width="2.2"/>
<text x="550.6" y="524.1" font-size="10.3" fill="#0a0a0a" textLength="96.9" lengthAdjust="spacingAndGlyphs" font-weight="700" font-family='"DejaVu Serif", "Liberation Serif", serif'>Dr A Prabukarthi</text>
<path d="M550.6 526.4h8" stroke="#c0504d" stroke-width=".6" stroke-dasharray="1 .6"/>
<text x="544.0" y="537.1" font-size="10.3" fill="#0a0a0a" textLength="109.7" lengthAdjust="spacingAndGlyphs" font-weight="700" font-family='"DejaVu Serif", "Liberation Serif", serif'>Assistant Professor</text>
<text x="486.7" y="552.8" font-size="10.3" fill="#0a0a0a" textLength="225.0" lengthAdjust="spacingAndGlyphs" font-weight="700" font-family='"DejaVu Serif", "Liberation Serif", serif'>Department of Mechanical Engineering</text>
<text x="522.3" y="568.8" font-size="10.3" fill="#0a0a0a" textLength="153.1" lengthAdjust="spacingAndGlyphs" font-weight="700" font-family='"DejaVu Serif", "Liberation Serif", serif'>PSG College of Technology</text>
<text x="542.4" y="584.5" font-size="10.3" fill="#0a0a0a" textLength="112.9" lengthAdjust="spacingAndGlyphs" font-weight="700" font-family='"DejaVu Serif", "Liberation Serif", serif'>Coimbatore-641004</text>
</svg>
<svg width="1046" height="450" viewBox="0 214 1046 450" style="position:absolute;left:0px;top:214px;overflow:hidden;" font-family='"Liberation Sans", sans-serif'>
<path d="M155 222.6h4.4l-2.2-2.6z" fill="#777"/><path d="M155 641.4h4.4l-2.2 2.6z" fill="#777"/>
<path d="M1038.2 222.6h4.4l-2.2-2.6z" fill="#777"/>
<path d="M1038 581h4.8l-2.4 2.8z" fill="#666"/>
<path d="M1037.8 596.6h5.2l-2.6-2.6zM1037.8 593.6h5.2l-2.6-2.6z M1037.8 602.6h5.2l-2.6 2.6zM1037.8 605.6h5.2l-2.6 2.6z" fill="#707070"/>
<text x="9.0" y="234.6" font-size="9.4" fill="#d9643c" textLength="3.6" lengthAdjust="spacingAndGlyphs">1</text>
<text x="8.8" y="334.2" font-size="9.4" fill="#666666" textLength="4.5" lengthAdjust="spacingAndGlyphs">2</text>
<text x="8.8" y="433.2" font-size="9.4" fill="#666666" textLength="4.5" lengthAdjust="spacingAndGlyphs">3</text>
<text x="8.8" y="532.4" font-size="9.4" fill="#666666" textLength="4.5" lengthAdjust="spacingAndGlyphs">4</text>
<text x="8.8" y="631.6" font-size="9.4" fill="#666666" textLength="4.5" lengthAdjust="spacingAndGlyphs">5</text>
<rect x="24.8" y="327.2" width="113" height="84.4" fill="#dfe6f2" stroke="#d3d6da" stroke-width=".6"/>
<rect x="28.4" y="330.4" width="104.6" height="9.6" fill="#e3e9f4" stroke="#2a3247" stroke-width=".8"/>
<text x="71.2" y="337.0" font-size="5.6" fill="#15151a" textLength="18.3" lengthAdjust="spacingAndGlyphs" font-weight="700" font-family='"Liberation Serif", serif'>Content</text>
<rect x="28.4" y="342.8" width="104.6" height="63.8" fill="#e0e6f2" stroke="#2a3247" stroke-width=".8"/>
<text x="32.2" y="347.6" font-size="3.3" fill="#1e1e24" textLength="45.8" lengthAdjust="spacingAndGlyphs" font-weight="700" font-family='"Liberation Serif", serif' opacity="0.8">• Wrong measurement - Example</text>
<text x="32.2" y="354.1" font-size="3.3" fill="#1e1e24" textLength="69.5" lengthAdjust="spacingAndGlyphs" font-weight="700" font-family='"Liberation Serif", serif' opacity="0.8">• Classification of surface roughness measurement</text>
<text x="32.2" y="360.5" font-size="3.3" fill="#1e1e24" textLength="45.2" lengthAdjust="spacingAndGlyphs" font-weight="700" font-family='"Liberation Serif", serif' opacity="0.8">• Objective of roughness analysis</text>
<text x="32.2" y="366.9" font-size="3.3" fill="#1e1e24" textLength="50.2" lengthAdjust="spacingAndGlyphs" font-weight="700" font-family='"Liberation Serif", serif' opacity="0.8">• Why to measure surface roughness</text>
<text x="32.2" y="373.0" font-size="3.3" fill="#1e1e24" textLength="45.2" lengthAdjust="spacingAndGlyphs" font-weight="700" font-family='"Liberation Serif", serif' opacity="0.8">• Surface texture/lay assessment</text>
<text x="32.2" y="379.6" font-size="3.3" fill="#1e1e24" textLength="70.2" lengthAdjust="spacingAndGlyphs" font-weight="700" font-family='"Liberation Serif", serif' opacity="0.8">• Principle and working of surface roughness tester</text>
<text x="32.2" y="386.0" font-size="3.3" fill="#1e1e24" textLength="48.8" lengthAdjust="spacingAndGlyphs" font-weight="700" font-family='"Liberation Serif", serif' opacity="0.8">• Roughness measurement symbols</text>
<text x="32.2" y="392.4" font-size="3.3" fill="#1e1e24" textLength="69.5" lengthAdjust="spacingAndGlyphs" font-weight="700" font-family='"Liberation Serif", serif' opacity="0.8">• Real time application of roughness measurement</text>
<text x="32.2" y="399.1" font-size="3.3" fill="#1e1e24" textLength="68.8" lengthAdjust="spacingAndGlyphs" font-weight="700" font-family='"Liberation Serif", serif' opacity="0.8">• Research application of roughness measurement</text>
<rect x="24.6" y="426.4" width="113.2" height="85.2" fill="#dfe6f2" stroke="#d3d6da" stroke-width=".6"/>
<rect x="28.4" y="428.8" width="107.2" height="10.4" fill="#e3e9f4" stroke="#2a3247" stroke-width=".8"/>
<text x="35.8" y="435.4" font-size="4.6" fill="#15151a" textLength="91.0" lengthAdjust="spacingAndGlyphs" font-weight="700" font-family='"Liberation Serif", serif'>Wrong measurements can be disastrous</text>
<rect x="28.4" y="441" width="60.2" height="67.2" fill="#e1e7f3" stroke="#2a3247" stroke-width=".8"/><path d="M88.9 441v67.6h-60.4" fill="none" stroke="#2a3247" stroke-width="1.1"/>
<text x="33.0" y="448.0" font-size="3.2" fill="#20202a" textLength="54.0" lengthAdjust="spacingAndGlyphs" opacity="0.8">“Mission specifications called for</text>
<text x="33.0" y="454.7" font-size="3.2" fill="#20202a" textLength="54.0" lengthAdjust="spacingAndGlyphs" font-weight="700" opacity="0.8">using metric units, but the Lockheed</text>
<text x="33.0" y="460.0" font-size="3.2" fill="#20202a" textLength="54.0" lengthAdjust="spacingAndGlyphs" opacity="0.8">group sent navigation information in</text>
<text x="33.0" y="466.0" font-size="3.2" fill="#20202a" textLength="54.0" lengthAdjust="spacingAndGlyphs" opacity="0.8">English units. The mixup meant that</text>
<text x="33.0" y="471.9" font-size="3.2" fill="#20202a" textLength="54.0" lengthAdjust="spacingAndGlyphs" font-weight="700" opacity="0.8">Lockheed  engineers  measured</text>
<text x="33.0" y="477.9" font-size="3.2" fill="#20202a" textLength="54.0" lengthAdjust="spacingAndGlyphs" font-weight="700" opacity="0.8">navigation with pounds force ,the</text>
<text x="33.0" y="483.3" font-size="3.2" fill="#20202a" textLength="54.0" lengthAdjust="spacingAndGlyphs" opacity="0.8">English unit for measuring thrust</text>
<text x="33.0" y="489.0" font-size="3.2" fill="#20202a" textLength="54.0" lengthAdjust="spacingAndGlyphs" opacity="0.8">Impulse, while JPL did its calculations</text>
<text x="33.0" y="494.8" font-size="3.2" fill="#20202a" textLength="54.0" lengthAdjust="spacingAndGlyphs" opacity="0.8">in newton, the metric measurement.</text>
<text x="33.0" y="500.5" font-size="3.2" fill="#20202a" textLength="54.0" lengthAdjust="spacingAndGlyphs" opacity="0.8">One pound force is equivalent to 4.45</text>
<text x="33.0" y="505.8" font-size="3.2" fill="#20202a" textLength="12.5" lengthAdjust="spacingAndGlyphs" opacity="0.8">newtons.”</text>
<defs><linearGradient id="mars" x1="0" y1="0" x2="1" y2=".3"><stop offset="0" stop-color="#e6a35c"/><stop offset=".5" stop-color="#b87444"/><stop offset="1" stop-color="#3f3c46"/></linearGradient></defs>
<rect x="91.7" y="443" width="41.3" height="44" fill="#0d0b0c"/><path d="M91.7 477.4c14-3 28-3.4 41.3-2.4v12h-41.3z" fill="url(#mars)"/><path d="M100 462.6l22-9.6 1.4 4-21.8 9z" fill="#8b8a88"/><path d="M122.6 447.6l3.6-1.4 1.8 6.6-3.6 1.2z" fill="#d9d2c4"/><path d="M103.4 448.4l1.6-.4 1 4.6-1.600000000000001.4z" fill="#b9b4a8"/><path d="M108 456l4 6-2 4-4-5z" fill="#a6653c"/><path d="M105 450v12" stroke="#777" stroke-width=".5"/>
<text x="97.6" y="492.0" font-size="2.9" fill="#1c1c22" textLength="31.0" lengthAdjust="spacingAndGlyphs" font-weight="700" font-style="italic" opacity="0.85">Caption to the loss of</text>
<text x="98.0" y="496.0" font-size="2.9" fill="#1c1c22" textLength="31.0" lengthAdjust="spacingAndGlyphs" font-weight="700" font-style="italic" opacity="0.85">NASA's Mars Orbiter</text>
<text x="105.6" y="500.0" font-size="2.9" fill="#1c1c22" textLength="15.4" lengthAdjust="spacingAndGlyphs" font-weight="700" font-style="italic" opacity="0.85">spacecraft</text>
<rect x="24.6" y="525.7" width="113.2" height="84.6" fill="#dfe6f2" stroke="#d3d6da" stroke-width=".6"/>
<rect x="25.4" y="528" width="110.2" height="7.4" fill="#e3e9f4" stroke="#2a3247" stroke-width=".8"/>
<text x="120.0" y="533.6" font-size="4.6" fill="#15151a" textLength="14.0" lengthAdjust="spacingAndGlyphs" font-weight="700" font-family='"Liberation Serif", serif'>Contd.</text>
<rect x="31" y="537.4" width="45.8" height="28" fill="#fafafa" stroke="#2b2f3a" stroke-width=".8"/><path d="M39 545c4-3 12-5 22-4.400000000000001 4 .4 7 1.4 7 3-3 3-12 4-20 4-5 0-8-1-9-2.6z" fill="#b9b9bb"/><ellipse cx="54.6" cy="555.6" rx="7" ry="5" fill="#cfcfd1"/><path d="M48 561.6h13" stroke="#c4c4c6" stroke-width=".8"/><path d="M35.4 541v6M65.4 552v6" stroke="#c9c9cb" stroke-width=".5"/>
<rect x="31.5" y="567.3" width="41.5" height="8.6" fill="#f7f8fa"/>
<text x="33.0" y="570.4" font-size="2.6" fill="#555" textLength="38.0" lengthAdjust="spacingAndGlyphs" opacity="0.7">Figure: Elements of surface roughness</text>
<text x="44.0" y="573.6" font-size="2.6" fill="#555" textLength="16.0" lengthAdjust="spacingAndGlyphs" opacity="0.7">(Lay, Waviness)</text>
<text x="82.0" y="539.2" font-size="3.1" fill="#16161c" textLength="48.4" lengthAdjust="spacingAndGlyphs" font-weight="700" opacity="0.85">Surface roughness is a component</text>
<text x="82.0" y="543.0" font-size="3.1" fill="#16161c" textLength="48.4" lengthAdjust="spacingAndGlyphs" opacity="0.85">of surface texture. It is quantified</text>
<text x="82.0" y="546.7" font-size="3.1" fill="#16161c" textLength="48.4" lengthAdjust="spacingAndGlyphs" opacity="0.85">by the deviations in the direction</text>
<text x="82.0" y="550.5" font-size="3.1" fill="#16161c" textLength="48.4" lengthAdjust="spacingAndGlyphs" opacity="0.85">of the normal vector of a real</text>
<text x="82.0" y="554.2" font-size="3.1" fill="#16161c" textLength="33.0" lengthAdjust="spacingAndGlyphs" font-weight="700" opacity="0.85">surface from its ideal form.</text>
<text x="82.0" y="558.0" font-size="3.1" fill="#16161c" textLength="48.4" lengthAdjust="spacingAndGlyphs" font-weight="700" opacity="0.85">If these deviations are large, the</text>
<text x="82.0" y="561.7" font-size="3.1" fill="#16161c" textLength="48.4" lengthAdjust="spacingAndGlyphs" opacity="0.85">surface is rough; if they are small,</text>
<text x="82.0" y="565.5" font-size="3.1" fill="#16161c" textLength="28.6" lengthAdjust="spacingAndGlyphs" opacity="0.85">the surface is smooth.</text>
<rect x="29.4" y="577" width="98.6" height="30" fill="#fbfbfc" stroke="#8a8e96" stroke-width=".5"/>
<path d="M58.5 577v30M93.6 577v30M29.4 582.6h98.6M29.4 586.6h98.6M29.4 590.2h98.6M29.4 594h98.6M29.4 598h98.6M29.4 602.4h98.6" stroke="#8a8e96" stroke-width=".45"/>
<text x="36.0" y="579.4" font-size="2.4" fill="#26262c" textLength="16.0" lengthAdjust="spacingAndGlyphs" opacity="0.75">Characteristics</text>
<text x="36.6" y="581.8" font-size="2.4" fill="#26262c" textLength="14.8" lengthAdjust="spacingAndGlyphs" font-weight="700" opacity="0.75">Macro deviations</text>
<text x="65.0" y="579.4" font-size="2.4" fill="#26262c" textLength="22.0" lengthAdjust="spacingAndGlyphs" opacity="0.75">Surface irregularities</text>
<text x="68.0" y="581.8" font-size="2.4" fill="#26262c" textLength="16.0" lengthAdjust="spacingAndGlyphs" font-weight="700" opacity="0.75">Micro deviations</text>
<text x="101.0" y="579.4" font-size="2.4" fill="#26262c" textLength="20.6" lengthAdjust="spacingAndGlyphs" opacity="0.75">Deviation from the</text>
<text x="102.6" y="581.8" font-size="2.4" fill="#26262c" textLength="17.0" lengthAdjust="spacingAndGlyphs" font-weight="700" opacity="0.75">nominal surface</text>
<text x="37.0" y="585.4" font-size="2.4" fill="#26262c" textLength="14.0" lengthAdjust="spacingAndGlyphs" opacity="0.75">First &amp; second</text>
<text x="71.0" y="585.4" font-size="2.4" fill="#26262c" textLength="11.0" lengthAdjust="spacingAndGlyphs" opacity="0.75">Third order</text>
<text x="102.0" y="585.4" font-size="2.4" fill="#26262c" textLength="17.0" lengthAdjust="spacingAndGlyphs" opacity="0.75">Third &amp; fourth order</text>
<text x="35.0" y="589.2" font-size="2.4" fill="#26262c" textLength="17.0" lengthAdjust="spacingAndGlyphs" font-weight="700" opacity="0.75">Form &amp; waviness</text>
<text x="64.0" y="589.2" font-size="2.4" fill="#26262c" textLength="24.0" lengthAdjust="spacingAndGlyphs" font-weight="700" opacity="0.75">Roughness / micro-texture</text>
<text x="101.0" y="589.2" font-size="2.4" fill="#26262c" textLength="20.0" lengthAdjust="spacingAndGlyphs" font-weight="700" opacity="0.75">Primary texture</text>
<text x="36.0" y="592.8" font-size="2.4" fill="#26262c" textLength="16.0" lengthAdjust="spacingAndGlyphs" opacity="0.75">Errors of geometry</text>
<text x="64.0" y="592.8" font-size="2.4" fill="#26262c" textLength="24.6" lengthAdjust="spacingAndGlyphs" opacity="0.75">Surface finish / Surface</text>
<text x="105.0" y="592.8" font-size="2.4" fill="#26262c" textLength="12.0" lengthAdjust="spacingAndGlyphs" opacity="0.75">Roughness</text>
<text x="34.0" y="597.0" font-size="2.4" fill="#26262c" textLength="20.0" lengthAdjust="spacingAndGlyphs" opacity="0.75">Machine tool deflections</text>
<text x="70.0" y="597.0" font-size="2.4" fill="#26262c" textLength="12.0" lengthAdjust="spacingAndGlyphs" opacity="0.75">Tool marks</text>
<text x="100.0" y="597.0" font-size="2.4" fill="#26262c" textLength="21.0" lengthAdjust="spacingAndGlyphs" opacity="0.75">Feed &amp; Speed of tool</text>
<text x="34.6" y="600.8" font-size="2.4" fill="#26262c" textLength="16.4" lengthAdjust="spacingAndGlyphs" opacity="0.75">Vibrations / Heat</text>
<text x="35.0" y="605.4" font-size="2.4" fill="#26262c" textLength="18.0" lengthAdjust="spacingAndGlyphs" opacity="0.75">Residual stress release</text>
<rect x="24.6" y="625.3" width="113.2" height="24" fill="#dfe6f2" stroke="#d3d6da" stroke-width=".6"/>
<rect x="29" y="627.6" width="104" height="6.6" fill="#e3e9f4" stroke="#2a3247" stroke-width=".8"/>
<text x="34.0" y="632.6" font-size="3.6" fill="#15151a" textLength="94.4" lengthAdjust="spacingAndGlyphs" font-weight="700" font-family='"Liberation Serif", serif'>Various methods of measuring surface roughness</text>
<rect x="73.4" y="639.4" width="8.6" height="4.6" fill="#f6efe4" stroke="#c9a66b" stroke-width=".5"/><path d="M75 641h5.4M75 642.6h5.4" stroke="#d8b98a" stroke-width=".5"/><path d="M77.7 644v3.2M39 647.4h78" stroke="#e0a052" stroke-width=".8"/><path d="M60 647.4v1.6M88 647.4v1.6" stroke="#c9a66b" stroke-width=".6"/>
<text x="172.7" y="640.3" font-size="10" fill="#5f5f5f" textLength="79.6" lengthAdjust="spacingAndGlyphs">Click to add notes</text>
<text x="5.4" y="660.1" font-size="6.9" fill="#505050" textLength="40.0" lengthAdjust="spacingAndGlyphs">Slide 1 of 64</text>
<path d="M58.6 653.4h3.4l1 .8 1-.8h3.4v6.6h-3.6l-.8 .7-.8-.7h-3.6z M63 654.2v6" fill="none" stroke="#777" stroke-width=".7"/><path d="M64.6 656.4l1 1.2 1.6-2.4" fill="none" stroke="#888" stroke-width=".6"/>
<text x="79.2" y="660.1" font-size="6.9" fill="#505050" textLength="44.2" lengthAdjust="spacingAndGlyphs">English (India)</text>
<circle cx="138.8" cy="656" r="2.9" fill="none" stroke="#666" stroke-width=".7" stroke-dasharray="12 4"/><path d="M139.6 655.6l3 4.6m-3.4 0l3.6-4.2m-3.800000000000001 1.4h4" stroke="#444" stroke-width=".7" fill="none"/>
<text x="146.7" y="660.1" font-size="6.9" fill="#505050" textLength="75.7" lengthAdjust="spacingAndGlyphs">Accessibility: Investigate</text>
<text x="712.0" y="660.1" font-size="6.9" fill="#505050" textLength="14.0" lengthAdjust="spacingAndGlyphs">Notes</text>
<text x="768.0" y="660.1" font-size="6.9" fill="#505050" textLength="32.0" lengthAdjust="spacingAndGlyphs">Comments</text>
<path d="M936 657h57" stroke="#7a7a7a" stroke-width=".8"/><rect x="951.4" y="653" width="2.4" height="8.4" fill="#5a5a5a"/><path d="M959.4 655.4v3.2" stroke="#888" stroke-width=".6"/><path d="M996.6 657h4.400000000000001m-2.2-2.2v4.400000000000001" stroke="#555" stroke-width=".8"/>
<text x="1010.8" y="660.1" font-size="6.6" fill="#505050" textLength="13.2" lengthAdjust="spacingAndGlyphs">81%</text>
<rect x="1034" y="653.6" width="6.4" height="6.4" fill="none" stroke="#777" stroke-width=".7"/><path d="M1037.2 653.6v6.4M1034 656.8h6.4" stroke="#999" stroke-width=".6"/>
</svg>
</div>
<!-- Teams people panel -->
<div id="people">
<div style="position:absolute;left:1046px;top:0px;width:320px;height:768px;background:#ffffff;"></div>
<div style="position:absolute;left:1046px;top:0px;width:2px;height:768px;background:linear-gradient(90deg,#efedee,#fdfdfd);"></div>
<div style="position:absolute;left:1067px;top:88px;width:278.6px;height:30.3px;background:#f0f0f0;border-radius:4px"></div>
<div style="position:absolute;left:1067px;top:126.4px;width:278.6px;height:32px;background:#ffffff;box-sizing:border-box;border:1px solid #dedede;border-radius:4px;box-shadow:0 1px 2px rgba(0,0,0,.12)"></div>
<div style="position:absolute;left:1048px;top:378px;width:318px;height:48px;background:#f4f3f2;"></div>
<svg width="320" height="768" viewBox="1046 0 320 768" style="position:absolute;left:1046px;top:0px;overflow:hidden;" font-family='"Liberation Sans", sans-serif'>
<text x="1067.6" y="57.1" font-size="18" fill="#1b1a19" textLength="56.2" lengthAdjust="spacingAndGlyphs" font-weight="700">People</text>
<path d="M1291.9 49h2v2h-2zM1297 49h2v2h-2zM1302 49h2v2h-2z" fill="#424242"/>
<path d="M1324 44.1l11.9 11.7m0-11.7l-11.9 11.7" stroke="#424242" stroke-width="1.1"/>
<text x="1078.8" y="108.8" font-size="13.6" fill="#555555" textLength="94.4" lengthAdjust="spacingAndGlyphs">Invite someone</text>
<g fill="#fff" stroke="#2d2c2c" stroke-width="1.05"><path d="M1165.6 138.6l-5.2 2.6m0 1.8l5.2 2.6" fill="none"/><circle cx="1167.5" cy="137.6" r="2.2"/><circle cx="1158.6" cy="142.1" r="2.2"/><circle cx="1167.5" cy="146.6" r="2.2"/></g>
<text x="1183.8" y="146.6" font-size="13.2" fill="#252423" textLength="73.4" lengthAdjust="spacingAndGlyphs" stroke="#252423" stroke-width="0.5">Share invite</text>
<path d="M1052.4 177.3h7.2l-3.6 4z" fill="#8a8886"/>
<text x="1067.4" y="183.6" font-size="13.6" fill="#333231" textLength="187.1" lengthAdjust="spacingAndGlyphs">Currently in this meeting (100)</text>
<text x="1299.6" y="183.4" font-size="12" fill="#3b3a39" textLength="41.8" lengthAdjust="spacingAndGlyphs">Mute all</text>
<clipPath id="lc"><rect x="1046" y="198" width="320" height="530.6"/></clipPath><g clip-path="url(#lc)">
<circle cx="1083" cy="210" r="15.8" fill="#f8e8c6"/>
<text x="1073.0" y="214.0" font-size="11.2" fill="#7f6318" textLength="19.9" lengthAdjust="spacingAndGlyphs" stroke="#7f6318" stroke-width="0.32">MA</text>
<text x="1111.7" y="205.3" font-size="13.6" fill="#252423" textLength="156.3" lengthAdjust="spacingAndGlyphs">m. abiseganathan (Guest)</text>
<text x="1111.7" y="223.7" font-size="11.6" fill="#616161" textLength="76.2" lengthAdjust="spacingAndGlyphs">Meeting guest</text>
<g transform="translate(1330 210.3) scale(0.93)" fill="none" stroke="#666564" stroke-width="0.95" stroke-linecap="round"><rect x="-2.75" y="-7.9" width="5.5" height="10.4" rx="2.75"/><path d="M-5.3 -.4v.2a5.3 5.3 0 0 0 10.6 0v-.2M0 5.2v2.4"/><path d="M-7.9 -8l15.8 15.9" stroke="#4a4948" stroke-width="0.9974999999999999"/></g>
<circle cx="1083" cy="258" r="15.8" fill="#f6cfdc"/>
<text x="1072.0" y="262.0" font-size="11.2" fill="#8c2b52" textLength="22.0" lengthAdjust="spacingAndGlyphs" stroke="#8c2b52" stroke-width="0.32">MM</text>
<text x="1111.7" y="262.7" font-size="13.6" fill="#252423" textLength="131.7" lengthAdjust="spacingAndGlyphs">MAKESH MANICKAM</text>
<circle cx="1093.9" cy="269" r="6.2" fill="#fff"/><circle cx="1093.9" cy="269" r="5" fill="#7ab648"/>
<path d="M1091.7 269.1l1.6 1.6 2.9-3" fill="none" stroke="#fff" stroke-width="1.1"/>
<g transform="translate(1330 258.3) scale(0.93)" fill="none" stroke="#666564" stroke-width="0.95" stroke-linecap="round"><rect x="-2.75" y="-7.9" width="5.5" height="10.4" rx="2.75"/><path d="M-5.3 -.4v.2a5.3 5.3 0 0 0 10.6 0v-.2M0 5.2v2.4"/><path d="M-7.9 -8l15.8 15.9" stroke="#4a4948" stroke-width="0.9974999999999999"/></g>
<circle cx="1083" cy="306" r="15.8" fill="#f8e8c6"/>
<text x="1073.6" y="310.0" font-size="11.2" fill="#7a5c14" textLength="18.8" lengthAdjust="spacingAndGlyphs" stroke="#7a5c14" stroke-width="0.32">MS</text>
<text x="1111.7" y="310.7" font-size="13.6" fill="#252423" textLength="101.9" lengthAdjust="spacingAndGlyphs">MANIRAJ SEKAR</text>
<circle cx="1093.9" cy="317" r="6.2" fill="#fff"/><circle cx="1093.9" cy="317" r="5" fill="#c4314b"/>
<g transform="translate(1330 306.3) scale(0.93)" fill="none" stroke="#666564" stroke-width="0.95" stroke-linecap="round"><rect x="-2.75" y="-7.9" width="5.5" height="10.4" rx="2.75"/><path d="M-5.3 -.4v.2a5.3 5.3 0 0 0 10.6 0v-.2M0 5.2v2.4"/><path d="M-7.9 -8l15.8 15.9" stroke="#4a4948" stroke-width="0.9974999999999999"/></g>
<circle cx="1083" cy="354" r="15.8" fill="#fbd6d0"/>
<text x="1073.2" y="358.0" font-size="11.2" fill="#a13a2d" textLength="19.6" lengthAdjust="spacingAndGlyphs" stroke="#a13a2d" stroke-width="0.32">MR</text>
<text x="1111.7" y="358.7" font-size="13.6" fill="#252423" textLength="109.0" lengthAdjust="spacingAndGlyphs">Mohan Rajendran</text>
<circle cx="1093.9" cy="365" r="6.2" fill="#fff"/><circle cx="1093.9" cy="365" r="5" fill="#c4314b"/>
<g transform="translate(1330 354.3) scale(0.93)" fill="none" stroke="#666564" stroke-width="0.95" stroke-linecap="round"><rect x="-2.75" y="-7.9" width="5.5" height="10.4" rx="2.75"/><path d="M-5.3 -.4v.2a5.3 5.3 0 0 0 10.6 0v-.2M0 5.2v2.4"/><path d="M-7.9 -8l15.8 15.9" stroke="#4a4948" stroke-width="0.9974999999999999"/></g>
<circle cx="1083" cy="402" r="15.8" fill="#f6cfdc"/>
<text x="1072.0" y="406.0" font-size="11.2" fill="#8c2b52" textLength="22.0" lengthAdjust="spacingAndGlyphs" stroke="#8c2b52" stroke-width="0.32">MM</text>
<text x="1111.7" y="397.3" font-size="13.6" fill="#252423" textLength="134.5" lengthAdjust="spacingAndGlyphs">moorthi mech (Guest)</text>
<text x="1111.7" y="415.7" font-size="11.6" fill="#616161" textLength="76.2" lengthAdjust="spacingAndGlyphs">Meeting guest</text>
<path d="M1324 401h2v2h-2zM1329 401h2v2h-2zM1334 401h2v2h-2z" fill="#424242"/>
<circle cx="1083" cy="450" r="15.8" fill="#cfe9ee"/>
<text x="1074.3" y="454.0" font-size="11.2" fill="#2b6a78" textLength="17.4" lengthAdjust="spacingAndGlyphs" stroke="#2b6a78" stroke-width="0.32">NK</text>
<text x="1111.7" y="445.3" font-size="13.6" fill="#252423" textLength="137.7" lengthAdjust="spacingAndGlyphs">Naveen Kumar (Guest)</text>
<text x="1111.7" y="463.7" font-size="11.6" fill="#616161" textLength="76.2" lengthAdjust="spacingAndGlyphs">Meeting guest</text>
<g transform="translate(1330 450.3) scale(0.93)" fill="none" stroke="#666564" stroke-width="0.95" stroke-linecap="round"><rect x="-2.75" y="-7.9" width="5.5" height="10.4" rx="2.75"/><path d="M-5.3 -.4v.2a5.3 5.3 0 0 0 10.6 0v-.2M0 5.2v2.4"/><path d="M-7.9 -8l15.8 15.9" stroke="#4a4948" stroke-width="0.9974999999999999"/></g>
<circle cx="1083" cy="498" r="15.8" fill="#e3ddf0"/>
<text x="1075.7" y="502.0" font-size="11.2" fill="#4a3f78" textLength="14.6" lengthAdjust="spacingAndGlyphs" stroke="#4a3f78" stroke-width="0.32">PA</text>
<text x="1111.7" y="493.3" font-size="13.6" fill="#252423" textLength="132.5" lengthAdjust="spacingAndGlyphs">parthiban T. A (Guest)</text>
<text x="1111.7" y="511.7" font-size="11.6" fill="#616161" textLength="76.2" lengthAdjust="spacingAndGlyphs">Meeting guest</text>
<g transform="translate(1330 498.3) scale(0.93)" fill="none" stroke="#666564" stroke-width="0.95" stroke-linecap="round"><rect x="-2.75" y="-7.9" width="5.5" height="10.4" rx="2.75"/><path d="M-5.3 -.4v.2a5.3 5.3 0 0 0 10.6 0v-.2M0 5.2v2.4"/><path d="M-7.9 -8l15.8 15.9" stroke="#4a4948" stroke-width="0.9974999999999999"/></g>
<circle cx="1083" cy="546" r="15.8" fill="#d2dce3"/>
<text x="1077.9" y="550.0" font-size="11.2" fill="#2e4656" textLength="10.2" lengthAdjust="spacingAndGlyphs" stroke="#2e4656" stroke-width="0.32">PI</text>
<text x="1111.7" y="550.7" font-size="13.6" fill="#252423" textLength="57.7" lengthAdjust="spacingAndGlyphs">PEC IQAC</text>
<circle cx="1093.9" cy="557" r="6.2" fill="#fff"/><circle cx="1093.9" cy="557" r="5" fill="#c4314b"/>
<g transform="translate(1330 546.3) scale(0.93)" fill="none" stroke="#666564" stroke-width="0.95" stroke-linecap="round"><rect x="-2.75" y="-7.9" width="5.5" height="10.4" rx="2.75"/><path d="M-5.3 -.4v.2a5.3 5.3 0 0 0 10.6 0v-.2M0 5.2v2.4"/><path d="M-7.9 -8l15.8 15.9" stroke="#4a4948" stroke-width="0.9974999999999999"/></g>
<circle cx="1083" cy="594" r="15.8" fill="#e7e8ea"/>
<g transform="translate(1076.6 594)"><g fill="#15181a"><rect x="-1.1" y="-6.9" width="2.2" height="2.6" transform="rotate(0)"/><rect x="-1.1" y="-6.9" width="2.2" height="2.6" transform="rotate(36)"/><rect x="-1.1" y="-6.9" width="2.2" height="2.6" transform="rotate(72)"/><rect x="-1.1" y="-6.9" width="2.2" height="2.6" transform="rotate(108)"/><rect x="-1.1" y="-6.9" width="2.2" height="2.6" transform="rotate(144)"/><rect x="-1.1" y="-6.9" width="2.2" height="2.6" transform="rotate(180)"/><rect x="-1.1" y="-6.9" width="2.2" height="2.6" transform="rotate(216)"/><rect x="-1.1" y="-6.9" width="2.2" height="2.6" transform="rotate(252)"/><rect x="-1.1" y="-6.9" width="2.2" height="2.6" transform="rotate(288)"/><rect x="-1.1" y="-6.9" width="2.2" height="2.6" transform="rotate(324)"/></g><circle r="5.5" fill="#15181a"/><circle r="3.9" fill="#5aa7a6"/><circle r="2.2" fill="#1e2a2c"/></g>
<rect x="1077.6" y="591.6" width="18.6" height="5.2" rx="1" fill="#15181a"/><path d="M1079.6 594.2h14.6" stroke="#8b8f91" stroke-width=".8"/><path d="M1074.6 594.2h6" stroke="#c98a5a" stroke-width=".7"/>
<text x="1111.7" y="589.3" font-size="13.6" fill="#252423" textLength="94.9" lengthAdjust="spacingAndGlyphs">PEC MECH Hod</text>
<text x="1111.7" y="607.7" font-size="11.6" fill="#616161" textLength="51.1" lengthAdjust="spacingAndGlyphs">Organizer</text>
<circle cx="1093.9" cy="605" r="6.2" fill="#fff"/><circle cx="1093.9" cy="605" r="5" fill="#c4314b"/>
<g transform="translate(1330 594.3) scale(0.93)" fill="none" stroke="#666564" stroke-width="0.95" stroke-linecap="round"><rect x="-2.75" y="-7.9" width="5.5" height="10.4" rx="2.75"/><path d="M-5.3 -.4v.2a5.3 5.3 0 0 0 10.6 0v-.2M0 5.2v2.4"/><path d="M-7.9 -8l15.8 15.9" stroke="#4a4948" stroke-width="0.9974999999999999"/></g>
<circle cx="1083" cy="642" r="15.8" fill="#f9e8bb"/>
<text x="1075.7" y="646.0" font-size="11.2" fill="#6a591d" textLength="14.6" lengthAdjust="spacingAndGlyphs" stroke="#6a591d" stroke-width="0.32">PR</text>
<text x="1111.7" y="646.7" font-size="13.6" fill="#252423" textLength="149.3" lengthAdjust="spacingAndGlyphs">PRABHAKARAN RAMAN</text>
<circle cx="1093.9" cy="653" r="6.2" fill="#fff"/><circle cx="1093.9" cy="653" r="5" fill="#c4314b"/>
<g transform="translate(1330 642.3) scale(0.93)" fill="none" stroke="#666564" stroke-width="0.95" stroke-linecap="round"><rect x="-2.75" y="-7.9" width="5.5" height="10.4" rx="2.75"/><path d="M-5.3 -.4v.2a5.3 5.3 0 0 0 10.6 0v-.2M0 5.2v2.4"/><path d="M-7.9 -8l15.8 15.9" stroke="#4a4948" stroke-width="0.9974999999999999"/></g>
<circle cx="1083" cy="690" r="19" fill="#fff" stroke="#8f90c9" stroke-width="1.6"/>
<circle cx="1083" cy="690" r="15.8" fill="#f9e8bb"/>
<text x="1079.7" y="694.0" font-size="11.2" fill="#7a5c14" textLength="6.6" lengthAdjust="spacingAndGlyphs" stroke="#7a5c14" stroke-width="0.32">P</text>
<text x="1111.7" y="685.3" font-size="13.6" fill="#252423" textLength="128.9" lengthAdjust="spacingAndGlyphs" font-weight="700">Prabukarthi (Guest)</text>
<text x="1111.7" y="703.7" font-size="11.6" fill="#616161" textLength="76.2" lengthAdjust="spacingAndGlyphs">Meeting guest</text>
<circle cx="1083" cy="738" r="15.8" fill="#d2dce3"/>
<text x="1075.7" y="742.0" font-size="11.2" fill="#2e4656" textLength="14.6" lengthAdjust="spacingAndGlyphs" stroke="#2e4656" stroke-width="0.32">PR</text>
<text x="1111.7" y="733.3" font-size="13.6" fill="#252423" textLength="106.3" lengthAdjust="spacingAndGlyphs">premnath (Guest)</text>
<text x="1111.7" y="751.7" font-size="11.6" fill="#616161" textLength="76.2" lengthAdjust="spacingAndGlyphs">Meeting guest</text>
<g transform="translate(1330 738.3) scale(0.93)" fill="none" stroke="#666564" stroke-width="0.95" stroke-linecap="round"><rect x="-2.75" y="-7.9" width="5.5" height="10.4" rx="2.75"/><path d="M-5.3 -.4v.2a5.3 5.3 0 0 0 10.6 0v-.2M0 5.2v2.4"/><path d="M-7.9 -8l15.8 15.9" stroke="#4a4948" stroke-width="0.9974999999999999"/></g>
</g>
<rect x="1356.2" y="544.2" width="5.8" height="77.6" rx="2.9" fill="#848484"/>
<path d="M1067 728.9h279" stroke="#e1dfdd" stroke-width="1"/>
<path d="M1053.4 745.4l3.4 3-3.4 3z" fill="#8a8886"/>
<text x="1067.3" y="753.4" font-size="13.6" fill="#333231" textLength="95.7" lengthAdjust="spacingAndGlyphs">Suggestions (1)</text>
<text x="1055.8" y="647.2" font-size="18.4" fill="#8e8e8e" textLength="155.6" lengthAdjust="spacingAndGlyphs" opacity="0.62">Activate Windows</text>
<text x="1055.8" y="668.8" font-size="14.2" fill="#8e8e8e" textLength="253.4" lengthAdjust="spacingAndGlyphs" opacity="0.62">Go to PC settings to activate Windows.</text>
</svg>
</div>
<!-- Teams call controls -->
<div id="controls">
<div style="position:absolute;left:866px;top:674px;width:180px;height:94px;background:#333131;"></div>
<div style="position:absolute;left:426px;top:629.8px;width:515px;height:51.8px;border-radius:4px;overflow:hidden;box-shadow:0 1px 4px rgba(0,0,0,.35)"><div style="position:absolute;left:0;top:0;width:307.4px;height:34.2px;background:#444243"></div><div style="position:absolute;left:0;top:34.2px;width:307.4px;height:18px;background:#363536"></div><div style="position:absolute;left:307.4px;top:0;width:103.6px;height:34.2px;background:#333233"></div><div style="position:absolute;left:307.4px;top:34.2px;width:103.6px;height:18px;background:#242324"></div><div style="position:absolute;left:411px;top:0;width:52px;height:52px;background:radial-gradient(ellipse 60% 45% at 50% 105%,#686dbb 0%,#4a4d88 55%,#3e4070 100%)"></div><div style="position:absolute;left:463px;top:0;width:52px;height:52px;background:#a72f45"></div><div style="position:absolute;left:97.6px;top:0;width:1.2px;height:52px;background:#1c1b1c"></div></div>
<svg width="1046" height="148" viewBox="0 620 1046 148" style="position:absolute;left:0px;top:620px;overflow:hidden;" font-family='"Liberation Sans", sans-serif'>
<defs><radialGradient id="rec"><stop offset="0" stop-color="#e8264f"/><stop offset=".55" stop-color="#d92a4e"/><stop offset=".8" stop-color="#8a2c3d"/><stop offset="1" stop-color="#5a2a33"/></radialGradient></defs><circle cx="449.1" cy="655.9" r="7" fill="url(#rec)" stroke="#fff" stroke-width="1.6"/>
<text x="472.5" y="660.8" font-size="14.2" fill="#9f9d9e" textLength="33.5" lengthAdjust="spacingAndGlyphs" font-weight="700">35:33</text>
<rect x="540.2" y="648.2" width="16.4" height="15.8" rx="3" fill="#8e8c8d"/><path d="M556 654.4l5-3.8c.5-.3.9-.1.9.5v10c0 .6-.4.8-.9.5l-5-3.8z" fill="#8e8c8d"/><path d="M539.6 644.6l21.8 21.8" stroke="#444243" stroke-width="3.2"/><path d="M540 645l21.4 21.4" stroke="#8e8c8d" stroke-width="1.2" stroke-linecap="round"/>
<rect x="599" y="645.8" width="8" height="14.2" rx="4" fill="#8e8c8d"/><path d="M596.3 655.4v.6a6.7 6.7 0 0 0 13.4 0v-.6M603 662.8v3" fill="none" stroke="#8e8c8d" stroke-width="1.3" stroke-linecap="round"/><path d="M592.3 645.1l20.8 21.2" stroke="#444243" stroke-width="3.2"/><path d="M592.7 645.5l20.2 20.6" stroke="#8e8c8d" stroke-width="1.2" stroke-linecap="round"/>
<rect x="645.2" y="649.2" width="19.2" height="13.8" rx="2" fill="none" stroke="#fff" stroke-width="1.4"/><path d="M654.8 660.6v-8m-3.2 3.2l3.2-3.3 3.2 3.3" fill="none" stroke="#fff" stroke-width="1.5" stroke-linecap="round" stroke-linejoin="round"/>
<circle cx="700" cy="656.3" r="2.1" fill="#fff"/><circle cx="707.3" cy="656.3" r="2.1" fill="#fff"/><circle cx="714.6" cy="656.3" r="2.1" fill="#fff"/>
<text x="764.0" y="659.6" font-size="6.9" fill="#1f1e1f" textLength="26.0" lengthAdjust="spacingAndGlyphs" opacity="0.6">Comments</text><ellipse cx="749" cy="656.6" rx="3.6" ry="3" fill="#222122" opacity=".55"/>
<path d="M755.6 657v-7.600000000000001a1.3 1.3 0 0 1 2.6 0v-1.6a1.3 1.3 0 0 1 2.6 0v.4a1.3 1.3 0 0 1 2.6 0v2a1.3 1.3 0 0 1 2.6 0v8.4l1.8-2c.8-.8 2-.6 2.4 .2 .2 .6 0 1-.4 1.600000000000001l-4.800000000000001 6.2c-1 1.4-2.4 2-4.2 2h-1.600000000000001c-3 0-5.2-2.2-5.2-5.2v-6.800000000000001a1.3 1.3 0 0 1 1.6-1.2z" fill="none" stroke="#fff" stroke-width="1.3" stroke-linejoin="round" transform="translate(-2.2 -.6)"/><path d="M756 649v7M758.6 647.4v8M761.2 647.8v7.8" stroke="#fff" stroke-width="1.1" transform="translate(0 0)"/>
<path d="M811 646.8a9.3 9.3 0 1 1-4.4 17.5l-4.800000000000001 1.6 1.600000000000001-4.600000000000001a9.3 9.3 0 0 1 7.600000000000001-14.5z" fill="none" stroke="#fff" stroke-width="1.4" stroke-linejoin="round"/><path d="M807.4 654h7M807.4 658.2h4.2" stroke="#fff" stroke-width="1.6" stroke-linecap="round"/><circle cx="820" cy="647.7" r="4.3" fill="#e97548"/>
<g fill="none" stroke="#fff" stroke-width="1.4"><circle cx="860" cy="649.7" r="3.7"/><circle cx="869" cy="651" r="2.4"/><path d="M854.8 656.4h10.4a2 2 0 0 1 2 2v1.200000000000001c0 2.6-3 4.4-7.2 4.4s-7.2-1.8-7.2-4.4v-1.200000000000001a2 2 0 0 1 2-2z"/><path d="M869.4 656.4h2.2a2 2 0 0 1 2 2v.6c0 2.2-1.6 3.6-4.4 3.8"/></g>
<path transform="translate(915.1 656) scale(1 1.12) translate(-915.1 -656.4)" d="M904.3 657.8c0-1 .5-2 1.600000000000001-2.9 2.4-1.9 5.600000000000001-2.9 9.2-2.9s6.800000000000001 1 9.2 2.9c1.100000000000001 .9 1.600000000000001 1.900000000000001 1.600000000000001 2.9v.9c0 .9-.7 1.5-1.600000000000001 1.400000000000001l-3.4-.6c-.7-.1-1.200000000000001-.6-1.300000000000001-1.300000000000001l-.3-2c-1.300000000000001-.5-2.7-.7-4.2-.7s-2.9 .2-4.2 .7l-.3 2c-.1 .7-.6 1.200000000000001-1.300000000000001 1.300000000000001l-3.4 .6c-.9 .1-1.600000000000001-.5-1.600000000000001-1.400000000000001z" fill="#fff"/>
<circle cx="956" cy="721" r="22" fill="#fbddd5"/>
<text x="945.8" y="727.2" font-size="17.2" fill="#a5432d" textLength="20.0" lengthAdjust="spacingAndGlyphs" stroke="#a5432d" stroke-width="0.45">SR</text>
<text x="880.8" y="763.0" font-size="12.4" fill="#ffffff" textLength="68.9" lengthAdjust="spacingAndGlyphs" stroke="#ffffff" stroke-width="0.5">SARAN RAJ.T</text>
<g transform="translate(963.8 759.2) scale(0.88)" fill="none" stroke="#e8e8e8" stroke-width="1.3" stroke-linecap="round"><rect x="-2.75" y="-7.9" width="5.5" height="10.4" rx="2.75"/><path d="M-5.3 -.4v.2a5.3 5.3 0 0 0 10.6 0v-.2M0 5.2v2.4"/><path d="M-7.9 -8l15.8 15.9" stroke="#ffffff" stroke-width="1.3650000000000002"/></g>
<text x="32.4" y="745.9" font-size="12.2" fill="#ffffff" textLength="101.4" lengthAdjust="spacingAndGlyphs" stroke="#ffffff" stroke-width="0.45">Prabukarthi (Guest)</text>
</svg>
</div>
</body></html>
